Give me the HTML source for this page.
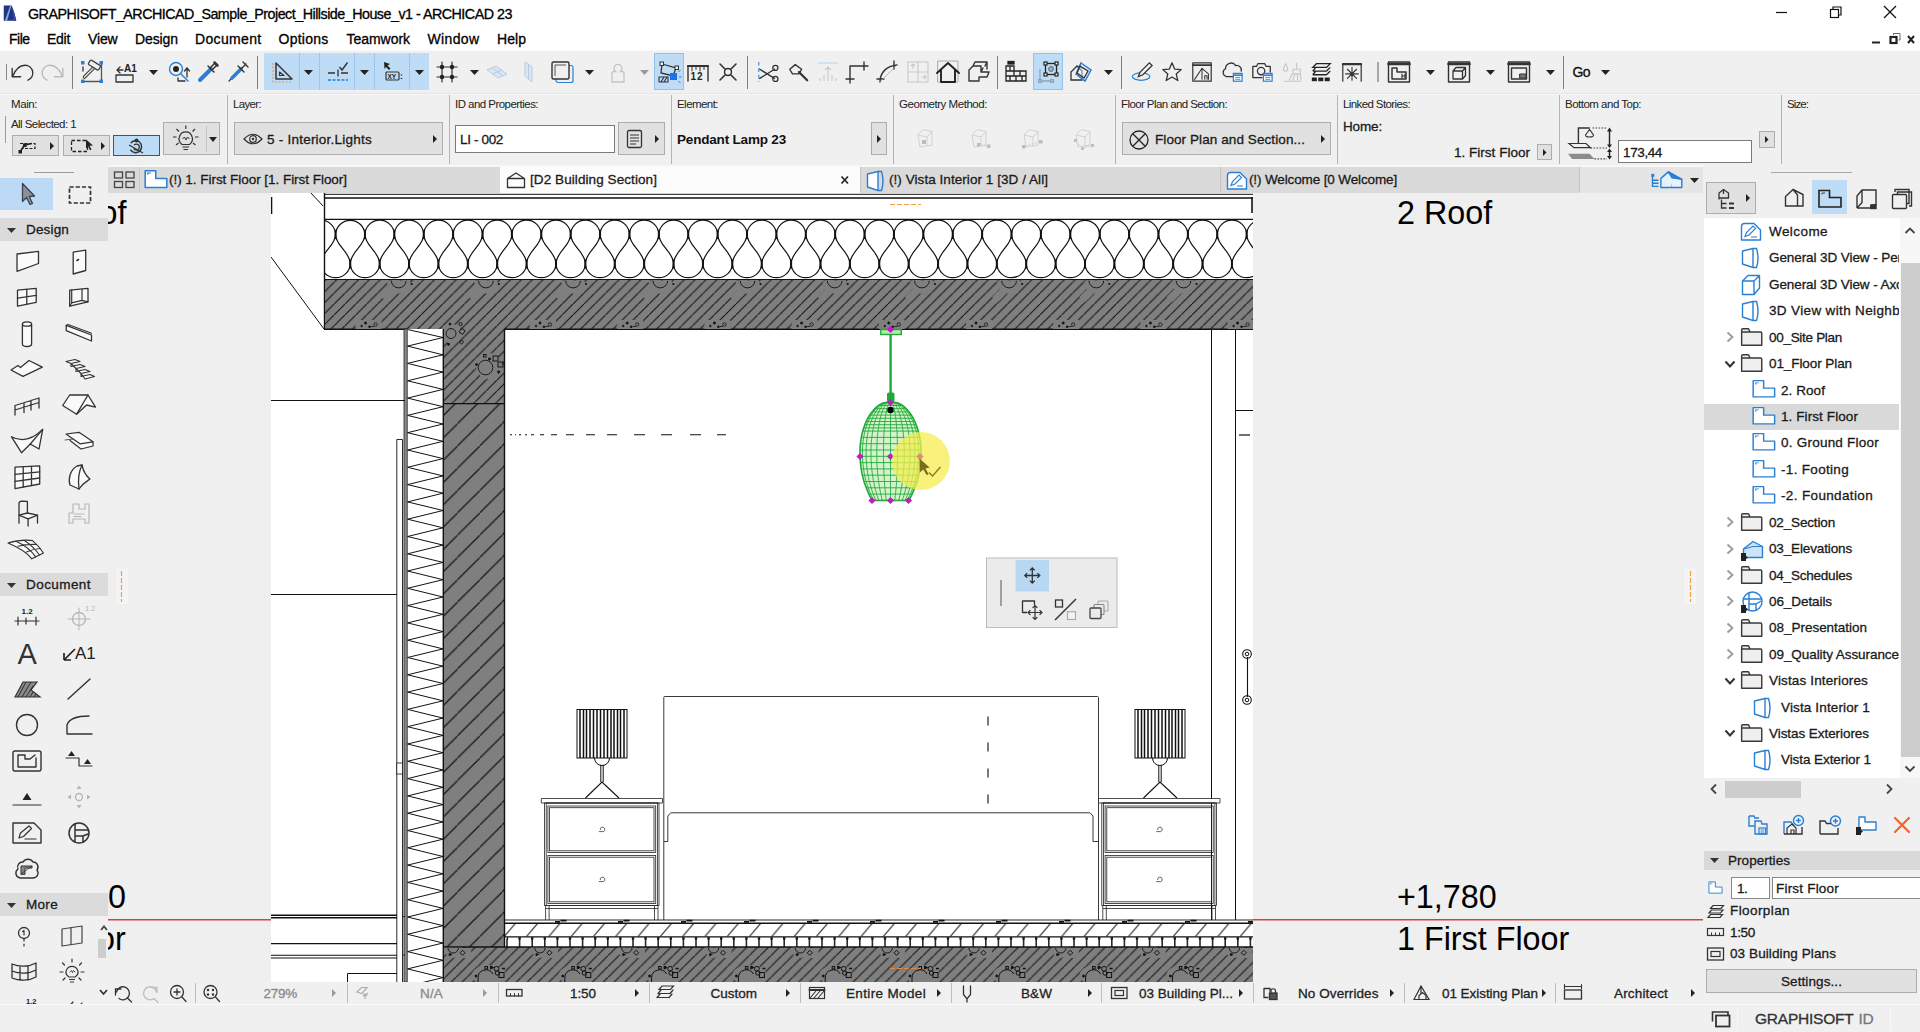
<!DOCTYPE html>
<html><head><meta charset="utf-8"><title>ARCHICAD 23</title>
<style>
html,body{margin:0;padding:0;background:#f0f0f0;}
body{width:1920px;height:1032px;position:relative;overflow:hidden;font-family:"Liberation Sans",sans-serif;}
.r{position:absolute;display:block;}
.t{position:absolute;white-space:pre;display:block;-webkit-text-stroke:0.3px currentColor;}
.n{-webkit-text-stroke:0;}
svg text{font-family:"Liberation Sans",sans-serif;}
</style></head><body>
<div class="r" style="left:0px;top:0px;width:1920px;height:49.5px;background:#ffffff;"></div>
<div class="r" style="left:0px;top:49.5px;width:1920px;height:1.5px;background:#f8f8f8;"></div>
<div class="r" style="left:0px;top:51px;width:1920px;height:115px;background:#f0f0f0;"></div>
<div class="r" style="left:0px;top:92.5px;width:1920px;height:1px;background:#e6e6e6;"></div>
<div class="r" style="left:0px;top:93.5px;width:1920px;height:1px;background:#f6f6f6;"></div>
<div class="r" style="left:0px;top:166px;width:108px;height:838px;background:#f0f0f0;"></div>
<div class="r" style="left:108px;top:166.5px;width:1595px;height:26.5px;background:#e3e3e3;"></div>
<div class="r" style="left:108px;top:193px;width:1595px;height:789px;background:#efefef;"></div>
<div class="r" style="left:108px;top:982px;width:1595px;height:22px;background:#f0f0f0;"></div>
<div class="r" style="left:1703px;top:166px;width:217px;height:838px;background:#f0f0f0;"></div>
<div class="r" style="left:0px;top:1004px;width:1920px;height:28px;background:#f0f0f0;"></div>
<span class="t" style="left:28.0px;top:4.8px;font-size:14.3px;line-height:19px;color:#000;letter-spacing:-0.506px;">GRAPHISOFT_ARCHICAD_Sample_Project_Hillside_House_v1 - ARCHICAD 23</span>
<span class="t" style="left:9.0px;top:29.8px;font-size:14px;line-height:18px;color:#000;letter-spacing:-0.515px;">File</span>
<span class="t" style="left:47.0px;top:29.8px;font-size:14px;line-height:18px;color:#000;letter-spacing:-0.281px;">Edit</span>
<span class="t" style="left:88.0px;top:29.8px;font-size:14px;line-height:18px;color:#000;letter-spacing:-0.148px;">View</span>
<span class="t" style="left:135.0px;top:29.8px;font-size:14px;line-height:18px;color:#000;letter-spacing:-0.097px;">Design</span>
<span class="t" style="left:195.0px;top:29.8px;font-size:14px;line-height:18px;color:#000;letter-spacing:0.336px;">Document</span>
<span class="t" style="left:278.5px;top:29.8px;font-size:14px;line-height:18px;color:#000;letter-spacing:0.250px;">Options</span>
<span class="t" style="left:346.5px;top:29.8px;font-size:14px;line-height:18px;color:#000;letter-spacing:-0.037px;">Teamwork</span>
<span class="t" style="left:427.5px;top:29.8px;font-size:14px;line-height:18px;color:#000;letter-spacing:0.368px;">Window</span>
<span class="t" style="left:497.0px;top:29.8px;font-size:14px;line-height:18px;color:#000;letter-spacing:0.051px;">Help</span>
<svg class="r" style="left:108px;top:193px;" width="1595" height="789" viewBox="108 193 1595 789" preserveAspectRatio="none"><defs>
<pattern id="hSlab" width="10.86" height="10.86" patternUnits="userSpaceOnUse" x="8.3" y="0">
<rect width="10.86" height="10.86" fill="#7f7f7f"/><path d="M-1,11.86 L11.86,-1" stroke="#151515" stroke-width="1.1"/></pattern>
<pattern id="hWall" width="22.3" height="22.3" patternUnits="userSpaceOnUse" x="11.5" y="0">
<rect width="22.3" height="22.3" fill="#7f7f7f"/><path d="M-1,23.3 L23.3,-1" stroke="#151515" stroke-width="1.2"/></pattern>
<pattern id="hFloor" width="10.86" height="10.86" patternUnits="userSpaceOnUse" x="10.7" y="0">
<rect width="10.86" height="10.86" fill="#7f7f7f"/><path d="M-1,11.86 L11.86,-1" stroke="#151515" stroke-width="1.1"/></pattern>
<pattern id="hScreed" width="22.3" height="14" patternUnits="userSpaceOnUse" x="504" y="923.3">
<path d="M0,13.5 L11.5,0" stroke="#111" stroke-width="1.1"/></pattern>
<clipPath id="cv"><rect x="271" y="193" width="982" height="789"/></clipPath>
<clipPath id="cvall"><rect x="108" y="193" width="1595" height="789"/></clipPath>
</defs>
<rect x="271" y="193" width="982" height="789" fill="#fff"/>
<g clip-path="url(#cv)" fill="none" stroke="#111" stroke-width="1">
<path d="M324,194.3H1253" stroke-width="1"/><path d="M324,198H1253" stroke-width="1.7"/>
<path d="M324.5,193V329" stroke-width="1.4"/>
<path d="M271.5,197V214" stroke-width="1.6"/>
<path d="M1252,197V213" stroke-width="1.6"/>
<path d="M311,193L323,206 M271,257L324,329"/>
<path d="M324,219.3H1253 M324,279.6H1253" stroke-width="1.3"/>
<g clip-path="url(#cIns)"><path d="M276.78,234.5 A14.70,14.70 0 0 1 306.17,234.5 M306.17,234.5 C306.17,246 291.47,252 291.47,263.8 M276.78,234.5 C276.78,246 291.47,252 291.47,263.8 M291.47,263.8 A14.70,14.25 0 0 0 320.86,263.8 M306.17,234.5 A14.70,14.70 0 0 1 335.56,234.5 M335.56,234.5 C335.56,246 320.86,252 320.86,263.8 M306.17,234.5 C306.17,246 320.86,252 320.86,263.8 M320.86,263.8 A14.70,14.25 0 0 0 350.25,263.8 M335.56,234.5 A14.70,14.70 0 0 1 364.94,234.5 M364.94,234.5 C364.94,246 350.25,252 350.25,263.8 M335.56,234.5 C335.56,246 350.25,252 350.25,263.8 M350.25,263.8 A14.70,14.25 0 0 0 379.64,263.8 M364.94,234.5 A14.70,14.70 0 0 1 394.33,234.5 M394.33,234.5 C394.33,246 379.64,252 379.64,263.8 M364.94,234.5 C364.94,246 379.64,252 379.64,263.8 M379.64,263.8 A14.70,14.25 0 0 0 409.03,263.8 M394.33,234.5 A14.70,14.70 0 0 1 423.72,234.5 M423.72,234.5 C423.72,246 409.03,252 409.03,263.8 M394.33,234.5 C394.33,246 409.03,252 409.03,263.8 M409.03,263.8 A14.70,14.25 0 0 0 438.42,263.8 M423.72,234.5 A14.70,14.70 0 0 1 453.11,234.5 M453.11,234.5 C453.11,246 438.42,252 438.42,263.8 M423.72,234.5 C423.72,246 438.42,252 438.42,263.8 M438.42,263.8 A14.70,14.25 0 0 0 467.81,263.8 M453.11,234.5 A14.70,14.70 0 0 1 482.50,234.5 M482.50,234.5 C482.50,246 467.81,252 467.81,263.8 M453.11,234.5 C453.11,246 467.81,252 467.81,263.8 M467.81,263.8 A14.70,14.25 0 0 0 497.20,263.8 M482.50,234.5 A14.70,14.70 0 0 1 511.89,234.5 M511.89,234.5 C511.89,246 497.20,252 497.20,263.8 M482.50,234.5 C482.50,246 497.20,252 497.20,263.8 M497.20,263.8 A14.70,14.25 0 0 0 526.59,263.8 M511.89,234.5 A14.70,14.70 0 0 1 541.28,234.5 M541.28,234.5 C541.28,246 526.59,252 526.59,263.8 M511.89,234.5 C511.89,246 526.59,252 526.59,263.8 M526.59,263.8 A14.70,14.25 0 0 0 555.98,263.8 M541.28,234.5 A14.70,14.70 0 0 1 570.67,234.5 M570.67,234.5 C570.67,246 555.98,252 555.98,263.8 M541.28,234.5 C541.28,246 555.98,252 555.98,263.8 M555.98,263.8 A14.70,14.25 0 0 0 585.37,263.8 M570.67,234.5 A14.70,14.70 0 0 1 600.06,234.5 M600.06,234.5 C600.06,246 585.37,252 585.37,263.8 M570.67,234.5 C570.67,246 585.37,252 585.37,263.8 M585.37,263.8 A14.70,14.25 0 0 0 614.76,263.8 M600.06,234.5 A14.70,14.70 0 0 1 629.45,234.5 M629.45,234.5 C629.45,246 614.76,252 614.76,263.8 M600.06,234.5 C600.06,246 614.76,252 614.76,263.8 M614.76,263.8 A14.70,14.25 0 0 0 644.15,263.8 M629.45,234.5 A14.70,14.70 0 0 1 658.84,234.5 M658.84,234.5 C658.84,246 644.15,252 644.15,263.8 M629.45,234.5 C629.45,246 644.15,252 644.15,263.8 M644.15,263.8 A14.70,14.25 0 0 0 673.54,263.8 M658.84,234.5 A14.70,14.70 0 0 1 688.23,234.5 M688.23,234.5 C688.23,246 673.54,252 673.54,263.8 M658.84,234.5 C658.84,246 673.54,252 673.54,263.8 M673.54,263.8 A14.70,14.25 0 0 0 702.93,263.8 M688.23,234.5 A14.70,14.70 0 0 1 717.62,234.5 M717.62,234.5 C717.62,246 702.93,252 702.93,263.8 M688.23,234.5 C688.23,246 702.93,252 702.93,263.8 M702.93,263.8 A14.70,14.25 0 0 0 732.32,263.8 M717.62,234.5 A14.70,14.70 0 0 1 747.01,234.5 M747.01,234.5 C747.01,246 732.32,252 732.32,263.8 M717.62,234.5 C717.62,246 732.32,252 732.32,263.8 M732.32,263.8 A14.70,14.25 0 0 0 761.71,263.8 M747.01,234.5 A14.70,14.70 0 0 1 776.40,234.5 M776.40,234.5 C776.40,246 761.71,252 761.71,263.8 M747.01,234.5 C747.01,246 761.71,252 761.71,263.8 M761.71,263.8 A14.70,14.25 0 0 0 791.10,263.8 M776.40,234.5 A14.70,14.70 0 0 1 805.79,234.5 M805.79,234.5 C805.79,246 791.10,252 791.10,263.8 M776.40,234.5 C776.40,246 791.10,252 791.10,263.8 M791.10,263.8 A14.70,14.25 0 0 0 820.49,263.8 M805.79,234.5 A14.70,14.70 0 0 1 835.18,234.5 M835.18,234.5 C835.18,246 820.49,252 820.49,263.8 M805.79,234.5 C805.79,246 820.49,252 820.49,263.8 M820.49,263.8 A14.70,14.25 0 0 0 849.88,263.8 M835.18,234.5 A14.70,14.70 0 0 1 864.57,234.5 M864.57,234.5 C864.57,246 849.88,252 849.88,263.8 M835.18,234.5 C835.18,246 849.88,252 849.88,263.8 M849.88,263.8 A14.70,14.25 0 0 0 879.27,263.8 M864.57,234.5 A14.70,14.70 0 0 1 893.96,234.5 M893.96,234.5 C893.96,246 879.27,252 879.27,263.8 M864.57,234.5 C864.57,246 879.27,252 879.27,263.8 M879.27,263.8 A14.70,14.25 0 0 0 908.66,263.8 M893.96,234.5 A14.70,14.70 0 0 1 923.35,234.5 M923.35,234.5 C923.35,246 908.66,252 908.66,263.8 M893.96,234.5 C893.96,246 908.66,252 908.66,263.8 M908.66,263.8 A14.70,14.25 0 0 0 938.05,263.8 M923.35,234.5 A14.70,14.70 0 0 1 952.74,234.5 M952.74,234.5 C952.74,246 938.05,252 938.05,263.8 M923.35,234.5 C923.35,246 938.05,252 938.05,263.8 M938.05,263.8 A14.70,14.25 0 0 0 967.44,263.8 M952.74,234.5 A14.70,14.70 0 0 1 982.13,234.5 M982.13,234.5 C982.13,246 967.44,252 967.44,263.8 M952.74,234.5 C952.74,246 967.44,252 967.44,263.8 M967.44,263.8 A14.70,14.25 0 0 0 996.83,263.8 M982.13,234.5 A14.70,14.70 0 0 1 1011.52,234.5 M1011.52,234.5 C1011.52,246 996.83,252 996.83,263.8 M982.13,234.5 C982.13,246 996.83,252 996.83,263.8 M996.83,263.8 A14.70,14.25 0 0 0 1026.22,263.8 M1011.52,234.5 A14.70,14.70 0 0 1 1040.91,234.5 M1040.91,234.5 C1040.91,246 1026.22,252 1026.22,263.8 M1011.52,234.5 C1011.52,246 1026.22,252 1026.22,263.8 M1026.22,263.8 A14.70,14.25 0 0 0 1055.61,263.8 M1040.91,234.5 A14.70,14.70 0 0 1 1070.30,234.5 M1070.30,234.5 C1070.30,246 1055.61,252 1055.61,263.8 M1040.91,234.5 C1040.91,246 1055.61,252 1055.61,263.8 M1055.61,263.8 A14.70,14.25 0 0 0 1085.00,263.8 M1070.31,234.5 A14.70,14.70 0 0 1 1099.69,234.5 M1099.69,234.5 C1099.69,246 1085.00,252 1085.00,263.8 M1070.31,234.5 C1070.31,246 1085.00,252 1085.00,263.8 M1085.00,263.8 A14.70,14.25 0 0 0 1114.39,263.8 M1099.70,234.5 A14.70,14.70 0 0 1 1129.09,234.5 M1129.09,234.5 C1129.09,246 1114.39,252 1114.39,263.8 M1099.70,234.5 C1099.70,246 1114.39,252 1114.39,263.8 M1114.39,263.8 A14.70,14.25 0 0 0 1143.78,263.8 M1129.09,234.5 A14.70,14.70 0 0 1 1158.48,234.5 M1158.48,234.5 C1158.48,246 1143.78,252 1143.78,263.8 M1129.09,234.5 C1129.09,246 1143.78,252 1143.78,263.8 M1143.78,263.8 A14.70,14.25 0 0 0 1173.17,263.8 M1158.48,234.5 A14.70,14.70 0 0 1 1187.87,234.5 M1187.87,234.5 C1187.87,246 1173.17,252 1173.17,263.8 M1158.48,234.5 C1158.48,246 1173.17,252 1173.17,263.8 M1173.17,263.8 A14.70,14.25 0 0 0 1202.56,263.8 M1187.87,234.5 A14.70,14.70 0 0 1 1217.26,234.5 M1217.26,234.5 C1217.26,246 1202.56,252 1202.56,263.8 M1187.87,234.5 C1187.87,246 1202.56,252 1202.56,263.8 M1202.56,263.8 A14.70,14.25 0 0 0 1231.95,263.8 M1217.26,234.5 A14.70,14.70 0 0 1 1246.65,234.5 M1246.65,234.5 C1246.65,246 1231.95,252 1231.95,263.8 M1217.26,234.5 C1217.26,246 1231.95,252 1231.95,263.8 M1231.95,263.8 A14.70,14.25 0 0 0 1261.34,263.8 M1246.65,234.5 A14.70,14.70 0 0 1 1276.04,234.5 M1276.04,234.5 C1276.04,246 1261.34,252 1261.34,263.8 M1246.65,234.5 C1246.65,246 1261.34,252 1261.34,263.8 M1261.34,263.8 A14.70,14.25 0 0 0 1290.73,263.8" stroke-width="1.2"/><path d="M306.17,230.5V239 M291.47,259.5V268.5 M335.56,230.5V239 M320.86,259.5V268.5 M364.94,230.5V239 M350.25,259.5V268.5 M394.33,230.5V239 M379.64,259.5V268.5 M423.72,230.5V239 M409.03,259.5V268.5 M453.11,230.5V239 M438.42,259.5V268.5 M482.50,230.5V239 M467.81,259.5V268.5 M511.89,230.5V239 M497.20,259.5V268.5 M541.28,230.5V239 M526.59,259.5V268.5 M570.67,230.5V239 M555.98,259.5V268.5 M600.06,230.5V239 M585.37,259.5V268.5 M629.45,230.5V239 M614.76,259.5V268.5 M658.84,230.5V239 M644.15,259.5V268.5 M688.23,230.5V239 M673.54,259.5V268.5 M717.62,230.5V239 M702.93,259.5V268.5 M747.01,230.5V239 M732.32,259.5V268.5 M776.40,230.5V239 M761.71,259.5V268.5 M805.79,230.5V239 M791.10,259.5V268.5 M835.18,230.5V239 M820.49,259.5V268.5 M864.57,230.5V239 M849.88,259.5V268.5 M893.96,230.5V239 M879.27,259.5V268.5 M923.35,230.5V239 M908.66,259.5V268.5 M952.74,230.5V239 M938.05,259.5V268.5 M982.13,230.5V239 M967.44,259.5V268.5 M1011.52,230.5V239 M996.83,259.5V268.5 M1040.91,230.5V239 M1026.22,259.5V268.5 M1070.30,230.5V239 M1055.61,259.5V268.5 M1099.69,230.5V239 M1085.00,259.5V268.5 M1129.09,230.5V239 M1114.39,259.5V268.5 M1158.48,230.5V239 M1143.78,259.5V268.5 M1187.87,230.5V239 M1173.17,259.5V268.5 M1217.26,230.5V239 M1202.56,259.5V268.5 M1246.65,230.5V239 M1231.95,259.5V268.5 M1276.04,230.5V239 M1261.34,259.5V268.5" stroke-width="2"/></g>
<defs><clipPath id="cIns"><rect x="325" y="219" width="928" height="61"/></clipPath></defs>
<rect x="325" y="280" width="928" height="49" fill="url(#hSlab)" stroke="none"/>
<path d="M324,329.3H407 M504,329.3H1253" stroke-width="1.6"/>
<g clip-path="url(#cSlab)">
<circle cx="398.7" cy="282" r="11.5" fill="#7f7f7f" stroke="none"/><path d="M381.7,297l9,-9l5.500,5.500l-9,9z" fill="#7f7f7f" stroke="none"/>
<path d="M391.3,280.500 a7.400,7.400 0 0 0 14.800,0" stroke-width="0.9"/><circle cx="411.7" cy="284" r="1.1" fill="#111" stroke="none"/>
<circle cx="485.9" cy="282" r="11.5" fill="#7f7f7f" stroke="none"/><path d="M468.9,297l9,-9l5.500,5.500l-9,9z" fill="#7f7f7f" stroke="none"/>
<path d="M478.5,280.500 a7.400,7.400 0 0 0 14.800,0" stroke-width="0.9"/><circle cx="498.9" cy="284" r="1.1" fill="#111" stroke="none"/>
<circle cx="573.1" cy="282" r="11.5" fill="#7f7f7f" stroke="none"/><path d="M556.1,297l9,-9l5.500,5.500l-9,9z" fill="#7f7f7f" stroke="none"/>
<path d="M565.7,280.500 a7.400,7.400 0 0 0 14.800,0" stroke-width="0.9"/><circle cx="586.1" cy="284" r="1.1" fill="#111" stroke="none"/>
<circle cx="660.3" cy="282" r="11.5" fill="#7f7f7f" stroke="none"/><path d="M643.3,297l9,-9l5.500,5.500l-9,9z" fill="#7f7f7f" stroke="none"/>
<path d="M652.9,280.500 a7.400,7.400 0 0 0 14.800,0" stroke-width="0.9"/><circle cx="673.3" cy="284" r="1.1" fill="#111" stroke="none"/>
<circle cx="747.5" cy="282" r="11.5" fill="#7f7f7f" stroke="none"/><path d="M730.5,297l9,-9l5.500,5.500l-9,9z" fill="#7f7f7f" stroke="none"/>
<path d="M740.1,280.500 a7.400,7.400 0 0 0 14.800,0" stroke-width="0.9"/><circle cx="760.5" cy="284" r="1.1" fill="#111" stroke="none"/>
<circle cx="834.7" cy="282" r="11.5" fill="#7f7f7f" stroke="none"/><path d="M817.7,297l9,-9l5.500,5.500l-9,9z" fill="#7f7f7f" stroke="none"/>
<path d="M827.3,280.500 a7.400,7.400 0 0 0 14.800,0" stroke-width="0.9"/><circle cx="847.7" cy="284" r="1.1" fill="#111" stroke="none"/>
<circle cx="921.9" cy="282" r="11.5" fill="#7f7f7f" stroke="none"/><path d="M904.9,297l9,-9l5.500,5.500l-9,9z" fill="#7f7f7f" stroke="none"/>
<path d="M914.5,280.500 a7.400,7.400 0 0 0 14.800,0" stroke-width="0.9"/><circle cx="934.9" cy="284" r="1.1" fill="#111" stroke="none"/>
<circle cx="1009.1" cy="282" r="11.5" fill="#7f7f7f" stroke="none"/><path d="M992.1,297l9,-9l5.500,5.500l-9,9z" fill="#7f7f7f" stroke="none"/>
<path d="M1001.7,280.500 a7.400,7.400 0 0 0 14.800,0" stroke-width="0.9"/><circle cx="1022.1" cy="284" r="1.1" fill="#111" stroke="none"/>
<circle cx="1096.3" cy="282" r="11.5" fill="#7f7f7f" stroke="none"/><path d="M1079.3,297l9,-9l5.500,5.500l-9,9z" fill="#7f7f7f" stroke="none"/>
<path d="M1088.9,280.500 a7.400,7.400 0 0 0 14.800,0" stroke-width="0.9"/><circle cx="1109.3" cy="284" r="1.1" fill="#111" stroke="none"/>
<circle cx="1183.5" cy="282" r="11.5" fill="#7f7f7f" stroke="none"/><path d="M1166.5,297l9,-9l5.500,5.500l-9,9z" fill="#7f7f7f" stroke="none"/>
<path d="M1176.1,280.500 a7.400,7.400 0 0 0 14.800,0" stroke-width="0.9"/><circle cx="1196.5" cy="284" r="1.1" fill="#111" stroke="none"/>
<circle cx="1270.7" cy="282" r="11.5" fill="#7f7f7f" stroke="none"/><path d="M1253.7,297l9,-9l5.500,5.500l-9,9z" fill="#7f7f7f" stroke="none"/>
<path d="M1263.3,280.500 a7.400,7.400 0 0 0 14.800,0" stroke-width="0.9"/><circle cx="1283.7" cy="284" r="1.1" fill="#111" stroke="none"/>
<rect x="355.6" y="320" width="26" height="9" fill="#7f7f7f" stroke="none"/>
<g stroke-width="0.8"><circle cx="375.6" cy="324.500" r="1.700"/><circle cx="365.6" cy="323" r="1.100" fill="#111"/><circle cx="369.6" cy="326.800" r="0.900" fill="#111"/><circle cx="361.6" cy="326" r="0.800" fill="#111"/><path d="M371.1,326.500h3" /></g>
<rect x="530.0" y="320" width="26" height="9" fill="#7f7f7f" stroke="none"/>
<g stroke-width="0.8"><circle cx="550.0" cy="324.500" r="1.700"/><circle cx="540.0" cy="323" r="1.100" fill="#111"/><circle cx="544.0" cy="326.800" r="0.900" fill="#111"/><circle cx="536.0" cy="326" r="0.800" fill="#111"/><path d="M545.5,326.500h3" /></g>
<rect x="617.2" y="320" width="26" height="9" fill="#7f7f7f" stroke="none"/>
<g stroke-width="0.8"><circle cx="637.2" cy="324.500" r="1.700"/><circle cx="627.2" cy="323" r="1.100" fill="#111"/><circle cx="631.2" cy="326.800" r="0.900" fill="#111"/><circle cx="623.2" cy="326" r="0.800" fill="#111"/><path d="M632.7,326.500h3" /></g>
<rect x="704.4" y="320" width="26" height="9" fill="#7f7f7f" stroke="none"/>
<g stroke-width="0.8"><circle cx="724.4" cy="324.500" r="1.700"/><circle cx="714.4" cy="323" r="1.100" fill="#111"/><circle cx="718.4" cy="326.800" r="0.900" fill="#111"/><circle cx="710.4" cy="326" r="0.800" fill="#111"/><path d="M719.9,326.500h3" /></g>
<rect x="791.6" y="320" width="26" height="9" fill="#7f7f7f" stroke="none"/>
<g stroke-width="0.8"><circle cx="811.6" cy="324.500" r="1.700"/><circle cx="801.6" cy="323" r="1.100" fill="#111"/><circle cx="805.6" cy="326.800" r="0.900" fill="#111"/><circle cx="797.6" cy="326" r="0.800" fill="#111"/><path d="M807.1,326.500h3" /></g>
<rect x="878.8" y="320" width="26" height="9" fill="#7f7f7f" stroke="none"/>
<g stroke-width="0.8"><circle cx="898.8" cy="324.500" r="1.700"/><circle cx="888.8" cy="323" r="1.100" fill="#111"/><circle cx="892.8" cy="326.800" r="0.900" fill="#111"/><circle cx="884.8" cy="326" r="0.800" fill="#111"/><path d="M894.3,326.500h3" /></g>
<rect x="966.0" y="320" width="26" height="9" fill="#7f7f7f" stroke="none"/>
<g stroke-width="0.8"><circle cx="986.0" cy="324.500" r="1.700"/><circle cx="976.0" cy="323" r="1.100" fill="#111"/><circle cx="980.0" cy="326.800" r="0.900" fill="#111"/><circle cx="972.0" cy="326" r="0.800" fill="#111"/><path d="M981.5,326.500h3" /></g>
<rect x="1053.2" y="320" width="26" height="9" fill="#7f7f7f" stroke="none"/>
<g stroke-width="0.8"><circle cx="1073.2" cy="324.500" r="1.700"/><circle cx="1063.2" cy="323" r="1.100" fill="#111"/><circle cx="1067.2" cy="326.800" r="0.900" fill="#111"/><circle cx="1059.2" cy="326" r="0.800" fill="#111"/><path d="M1068.7,326.500h3" /></g>
<rect x="1140.4" y="320" width="26" height="9" fill="#7f7f7f" stroke="none"/>
<g stroke-width="0.8"><circle cx="1160.4" cy="324.500" r="1.700"/><circle cx="1150.4" cy="323" r="1.100" fill="#111"/><circle cx="1154.4" cy="326.800" r="0.900" fill="#111"/><circle cx="1146.4" cy="326" r="0.800" fill="#111"/><path d="M1155.9,326.500h3" /></g>
<rect x="1227.6" y="320" width="26" height="9" fill="#7f7f7f" stroke="none"/>
<g stroke-width="0.8"><circle cx="1247.6" cy="324.500" r="1.700"/><circle cx="1237.6" cy="323" r="1.100" fill="#111"/><circle cx="1241.6" cy="326.800" r="0.900" fill="#111"/><circle cx="1233.6" cy="326" r="0.800" fill="#111"/><path d="M1243.1,326.500h3" /></g>
</g>
<defs><clipPath id="cSlab"><rect x="325" y="280.500" width="928" height="48.500"/></clipPath></defs>
<rect x="443" y="329" width="61.5" height="75" fill="url(#hSlab)" stroke="none"/>
<rect x="443" y="404" width="61.5" height="543" fill="url(#hWall)" stroke="none"/>
<path d="M443,403.6H504.5" stroke-width="1.2"/>
<path d="M443.3,329V947 M504.5,329V947" stroke-width="1.4"/>
<rect x="404" y="329" width="3.2" height="653" fill="#8c8c8c" stroke="#222" stroke-width="0.8"/>
<path d="M407.6,329.5 L443,337.5 L407.6,346.1 L443,354.8 L407.6,363.4 L443,372.1 L407.6,380.8 L443,389.4 L407.6,398.1 L443,406.7 L407.6,415.4 L443,424.0 L407.6,432.7 L443,441.3 L407.6,450.0 L443,458.6 L407.6,467.3 L443,475.9 L407.6,484.6 L443,493.2 L407.6,501.9 L443,510.5 L407.6,519.2 L443,527.8 L407.6,536.5 L443,545.1 L407.6,553.8 L443,562.4 L407.6,571.0 L443,579.7 L407.6,588.3 L443,597.0 L407.6,605.6 L443,614.3 L407.6,622.9 L443,631.6 L407.6,640.2 L443,648.9 L407.6,657.5 L443,666.2 L407.6,674.8 L443,683.5 L407.6,692.1 L443,700.8 L407.6,709.4 L443,718.1 L407.6,726.7 L443,735.4 L407.6,744.0 L443,752.7 L407.6,761.3 L443,770.0 L407.6,778.6 L443,787.3 L407.6,795.9 L443,804.6 L407.6,813.2 L443,821.9 L407.6,830.5 L443,839.2 L407.6,847.8 L443,856.5 L407.6,865.1 L443,873.8 L407.6,882.4 L443,891.1 L407.6,899.7 L443,908.4 L407.6,917.0 L443,925.7 L407.6,934.3 L443,943.0 L407.6,951.6 L443,960.3 L407.6,968.9 L443,977.6 L407.6,986.2" stroke-width="1" stroke-linejoin="miter"/>
<g clip-path="url(#cWallTop)"><circle cx="452" cy="334" r="10" fill="#7f7f7f" stroke="none"/><circle cx="489" cy="366" r="13" fill="#7f7f7f" stroke="none"/>
<g stroke-width="0.9"><circle cx="451" cy="333.500" r="5"/><rect x="460" y="329" width="4.500" height="4.500" transform="rotate(35 462 331)"/><rect x="460" y="340.500" width="3" height="3" transform="rotate(45 461.500 342)"/><circle cx="450" cy="324" r="1" fill="#111"/><path d="M447.500,343l2.500,1l-2,1.500z" fill="#111"/><circle cx="460.500" cy="324" r="1.600"/><circle cx="485.500" cy="367.500" r="7.300"/><rect x="493" y="356" width="5" height="5"/><rect x="498" y="362" width="5" height="5"/><rect x="483.500" y="354.500" width="2.500" height="2.500"/><circle cx="476.500" cy="364.500" r="1" fill="#111"/><circle cx="489.500" cy="359" r="1.100" fill="#111"/><path d="M497.500,371l2.500,0.500l-1.500,2z" fill="#111"/></g></g>
<defs><clipPath id="cWallTop"><rect x="444" y="322" width="60" height="82"/></clipPath></defs>
<path d="M271,400.5H405 M271,594.5H397"/>
<path d="M396.8,982V439.5H402.5V982" stroke-width="0.9"/>
<rect x="396.8" y="763" width="5.7" height="11" fill="#fff" stroke-width="0.8"/>
<path d="M271,915.2H397 M271,917.8H397" stroke-width="1.4"/><path d="M271,943.6H397 M271,955.2H397 M271,958H397" stroke-width="1.1"/>
<path d="M347.5,982V973.5H397"/>
<path d="M402,916.5H405 M402,955H405" stroke-width="0.8"/>
<path d="M510,434.8H512 M515,434.8H516 M519,434.8H521 M525,434.8H527 M531,434.8H534 M540,434.8H544 M551,434.8H557 M566,434.8H574 M586,434.8H595 M607,434.8H617 M634,434.8H645 M661,434.8H672 M690,434.8H701 M717,434.8H726" stroke-width="1.1"/>
<path d="M1211.5,329V920 M1235.5,329V920"/>
<path d="M1236,410.5H1253"/><path d="M1239,435H1250" stroke-width="1.2"/>
<path d="M1247.5,657V697" stroke-width="1.1"/>
<circle cx="1247" cy="654" r="4.3" stroke-width="1.1"/><circle cx="1247" cy="654" r="1.8" stroke-width="1"/>
<circle cx="1247" cy="700" r="4.3" stroke-width="1.1"/><circle cx="1247" cy="700" r="1.8" stroke-width="1"/>
<path d="M504.5,920H1253" stroke-width="0.9"/><path d="M504.5,923.2H1253" stroke-width="1.4"/>
<rect x="505" y="923.3" width="748" height="13.5" fill="url(#hScreed)" stroke="none"/>
<path d="M504.5,936.9H1253" stroke-width="1.1"/>
<path d="M507.0,947V938.5 M519.6,947V938.5 M532.2,947V938.5 M544.8,947V938.5 M557.4,947V938.5 M570.0,947V938.5 M582.6,947V938.5 M595.2,947V938.5 M607.8,947V938.5 M620.4,947V938.5 M633.0,947V938.5 M645.6,947V938.5 M658.2,947V938.5 M670.8,947V938.5 M683.4,947V938.5 M696.0,947V938.5 M708.6,947V938.5 M721.2,947V938.5 M733.8,947V938.5 M746.4,947V938.5 M759.0,947V938.5 M771.6,947V938.5 M784.2,947V938.5 M796.8,947V938.5 M809.4,947V938.5 M822.0,947V938.5 M834.6,947V938.5 M847.2,947V938.5 M859.8,947V938.5 M872.4,947V938.5 M885.0,947V938.5 M897.6,947V938.5 M910.2,947V938.5 M922.8,947V938.5 M935.4,947V938.5 M948.0,947V938.5 M960.6,947V938.5 M973.2,947V938.5 M985.8,947V938.5 M998.4,947V938.5 M1011.0,947V938.5 M1023.6,947V938.5 M1036.2,947V938.5 M1048.8,947V938.5 M1061.4,947V938.5 M1074.0,947V938.5 M1086.6,947V938.5 M1099.2,947V938.5 M1111.8,947V938.5 M1124.4,947V938.5 M1137.0,947V938.5 M1149.6,947V938.5 M1162.2,947V938.5 M1174.8,947V938.5 M1187.4,947V938.5 M1200.0,947V938.5 M1212.6,947V938.5 M1225.2,947V938.5 M1237.8,947V938.5 M1250.4,947V938.5" stroke="#2a2a2a" stroke-width="1.6"/>
<path d="M507,938.3H1253" stroke="#111" stroke-width="2.2" stroke-dasharray="2.4 10.2" stroke-dashoffset="1.2"/>
<path d="M555.0,921.9h5 M560.5,920.6h6 M618.0,921.9h5 M623.5,920.6h6 M681.0,921.9h5 M686.5,920.6h6 M744.0,921.9h5 M749.5,920.6h6 M807.0,921.9h5 M812.5,920.6h6 M870.0,921.9h5 M875.5,920.6h6 M933.0,921.9h5 M938.5,920.6h6 M996.0,921.9h5 M1001.5,920.6h6 M1059.0,921.9h5 M1064.5,920.6h6 M1122.0,921.9h5 M1127.5,920.6h6 M1185.0,921.9h5 M1190.5,920.6h6 M1248.0,921.9h5 M1253.5,920.6h6" stroke-width="1.6"/>
<rect x="443" y="947" width="810" height="36" fill="url(#hFloor)" stroke="none"/>
<path d="M443,947H1253" stroke-width="1.4"/>
<path d="M443.3,947V982" stroke-width="1.4"/>
<g clip-path="url(#cFloor)">
<circle cx="453.2" cy="949" r="9" fill="#7f7f7f" stroke="none"/><rect x="459.2" y="948" width="12" height="10" fill="#7f7f7f" stroke="none"/>
<g stroke-width="0.9"><path d="M448.0,947.800 a5.200,5.200 0 0 0 10.400,0"/><rect x="460.8" y="951" width="3.600" height="3.600" transform="rotate(45 462.6 952.800)"/><path d="M449.2,953.500l2.600,1l-2.600,1.200z" fill="#111"/></g>
<circle cx="540.0" cy="949" r="9" fill="#7f7f7f" stroke="none"/><rect x="546.0" y="948" width="12" height="10" fill="#7f7f7f" stroke="none"/>
<g stroke-width="0.9"><path d="M534.8,947.800 a5.200,5.200 0 0 0 10.400,0"/><rect x="547.6" y="951" width="3.600" height="3.600" transform="rotate(45 549.4 952.800)"/><path d="M536.0,953.500l2.600,1l-2.600,1.200z" fill="#111"/></g>
<circle cx="626.8" cy="949" r="9" fill="#7f7f7f" stroke="none"/><rect x="632.8" y="948" width="12" height="10" fill="#7f7f7f" stroke="none"/>
<g stroke-width="0.9"><path d="M621.6,947.800 a5.200,5.200 0 0 0 10.400,0"/><rect x="634.4" y="951" width="3.600" height="3.600" transform="rotate(45 636.2 952.800)"/><path d="M622.8,953.500l2.600,1l-2.600,1.200z" fill="#111"/></g>
<circle cx="713.6" cy="949" r="9" fill="#7f7f7f" stroke="none"/><rect x="719.6" y="948" width="12" height="10" fill="#7f7f7f" stroke="none"/>
<g stroke-width="0.9"><path d="M708.4,947.800 a5.200,5.200 0 0 0 10.400,0"/><rect x="721.2" y="951" width="3.600" height="3.600" transform="rotate(45 723.0 952.800)"/><path d="M709.6,953.500l2.600,1l-2.600,1.200z" fill="#111"/></g>
<circle cx="800.4" cy="949" r="9" fill="#7f7f7f" stroke="none"/><rect x="806.4" y="948" width="12" height="10" fill="#7f7f7f" stroke="none"/>
<g stroke-width="0.9"><path d="M795.2,947.800 a5.200,5.200 0 0 0 10.400,0"/><rect x="808.0" y="951" width="3.600" height="3.600" transform="rotate(45 809.8 952.800)"/><path d="M796.4,953.500l2.600,1l-2.600,1.200z" fill="#111"/></g>
<circle cx="887.2" cy="949" r="9" fill="#7f7f7f" stroke="none"/><rect x="893.2" y="948" width="12" height="10" fill="#7f7f7f" stroke="none"/>
<g stroke-width="0.9"><path d="M882.0,947.800 a5.200,5.200 0 0 0 10.400,0"/><rect x="894.8" y="951" width="3.600" height="3.600" transform="rotate(45 896.6 952.800)"/><path d="M883.2,953.500l2.600,1l-2.600,1.200z" fill="#111"/></g>
<circle cx="974.0" cy="949" r="9" fill="#7f7f7f" stroke="none"/><rect x="980.0" y="948" width="12" height="10" fill="#7f7f7f" stroke="none"/>
<g stroke-width="0.9"><path d="M968.8,947.800 a5.200,5.200 0 0 0 10.400,0"/><rect x="981.6" y="951" width="3.600" height="3.600" transform="rotate(45 983.4 952.800)"/><path d="M970.0,953.500l2.600,1l-2.600,1.200z" fill="#111"/></g>
<circle cx="1060.8" cy="949" r="9" fill="#7f7f7f" stroke="none"/><rect x="1066.8" y="948" width="12" height="10" fill="#7f7f7f" stroke="none"/>
<g stroke-width="0.9"><path d="M1055.6,947.800 a5.200,5.200 0 0 0 10.400,0"/><rect x="1068.4" y="951" width="3.600" height="3.600" transform="rotate(45 1070.2 952.800)"/><path d="M1056.8,953.500l2.600,1l-2.600,1.200z" fill="#111"/></g>
<circle cx="1147.6" cy="949" r="9" fill="#7f7f7f" stroke="none"/><rect x="1153.6" y="948" width="12" height="10" fill="#7f7f7f" stroke="none"/>
<g stroke-width="0.9"><path d="M1142.4,947.800 a5.200,5.200 0 0 0 10.400,0"/><rect x="1155.2" y="951" width="3.600" height="3.600" transform="rotate(45 1157.0 952.800)"/><path d="M1143.6,953.500l2.600,1l-2.600,1.200z" fill="#111"/></g>
<circle cx="1234.4" cy="949" r="9" fill="#7f7f7f" stroke="none"/><rect x="1240.4" y="948" width="12" height="10" fill="#7f7f7f" stroke="none"/>
<g stroke-width="0.9"><path d="M1229.2,947.800 a5.200,5.200 0 0 0 10.400,0"/><rect x="1242.0" y="951" width="3.600" height="3.600" transform="rotate(45 1243.8 952.800)"/><path d="M1230.4,953.500l2.600,1l-2.600,1.200z" fill="#111"/></g>
<ellipse cx="489.0" cy="975" rx="17" ry="10" fill="#7f7f7f" stroke="none"/>
<g stroke-width="1"><path d="M478.0,982v-4 a8,8 0 0 1 15,-4"/><circle cx="496.5" cy="968.800" r="2.400"/><rect x="499.0" y="972.500" width="5" height="5"/><circle cx="497.5" cy="973" r="2.200"/><rect x="485.0" y="966.500" width="2.500" height="2.500"/><path d="M490.5,966l3,1.500l-3,1.500z" fill="#111"/><circle cx="476.0" cy="976" r="1" fill="#111"/><path d="M502.0,968.500h3" stroke-width="1.500"/></g>
<ellipse cx="575.8" cy="975" rx="17" ry="10" fill="#7f7f7f" stroke="none"/>
<g stroke-width="1"><path d="M564.8,982v-4 a8,8 0 0 1 15,-4"/><circle cx="583.3" cy="968.800" r="2.400"/><rect x="585.8" y="972.500" width="5" height="5"/><circle cx="584.3" cy="973" r="2.200"/><rect x="571.8" y="966.500" width="2.500" height="2.500"/><path d="M577.3,966l3,1.500l-3,1.500z" fill="#111"/><circle cx="562.8" cy="976" r="1" fill="#111"/><path d="M588.8,968.500h3" stroke-width="1.500"/></g>
<ellipse cx="662.6" cy="975" rx="17" ry="10" fill="#7f7f7f" stroke="none"/>
<g stroke-width="1"><path d="M651.6,982v-4 a8,8 0 0 1 15,-4"/><circle cx="670.1" cy="968.800" r="2.400"/><rect x="672.6" y="972.500" width="5" height="5"/><circle cx="671.1" cy="973" r="2.200"/><rect x="658.6" y="966.500" width="2.500" height="2.500"/><path d="M664.1,966l3,1.500l-3,1.500z" fill="#111"/><circle cx="649.6" cy="976" r="1" fill="#111"/><path d="M675.6,968.500h3" stroke-width="1.500"/></g>
<ellipse cx="749.4" cy="975" rx="17" ry="10" fill="#7f7f7f" stroke="none"/>
<g stroke-width="1"><path d="M738.4,982v-4 a8,8 0 0 1 15,-4"/><circle cx="756.9" cy="968.800" r="2.400"/><rect x="759.4" y="972.500" width="5" height="5"/><circle cx="757.9" cy="973" r="2.200"/><rect x="745.4" y="966.500" width="2.500" height="2.500"/><path d="M750.9,966l3,1.500l-3,1.500z" fill="#111"/><circle cx="736.4" cy="976" r="1" fill="#111"/><path d="M762.4,968.500h3" stroke-width="1.500"/></g>
<ellipse cx="836.2" cy="975" rx="17" ry="10" fill="#7f7f7f" stroke="none"/>
<g stroke-width="1"><path d="M825.2,982v-4 a8,8 0 0 1 15,-4"/><circle cx="843.7" cy="968.800" r="2.400"/><rect x="846.2" y="972.500" width="5" height="5"/><circle cx="844.7" cy="973" r="2.200"/><rect x="832.2" y="966.500" width="2.500" height="2.500"/><path d="M837.7,966l3,1.500l-3,1.500z" fill="#111"/><circle cx="823.2" cy="976" r="1" fill="#111"/><path d="M849.2,968.500h3" stroke-width="1.500"/></g>
<ellipse cx="923.0" cy="975" rx="17" ry="10" fill="#7f7f7f" stroke="none"/>
<g stroke-width="1"><path d="M912.0,982v-4 a8,8 0 0 1 15,-4"/><circle cx="930.5" cy="968.800" r="2.400"/><rect x="933.0" y="972.500" width="5" height="5"/><circle cx="931.5" cy="973" r="2.200"/><rect x="919.0" y="966.500" width="2.500" height="2.500"/><path d="M924.5,966l3,1.500l-3,1.500z" fill="#111"/><circle cx="910.0" cy="976" r="1" fill="#111"/><path d="M936.0,968.500h3" stroke-width="1.500"/></g>
<ellipse cx="1009.8" cy="975" rx="17" ry="10" fill="#7f7f7f" stroke="none"/>
<g stroke-width="1"><path d="M998.8,982v-4 a8,8 0 0 1 15,-4"/><circle cx="1017.3" cy="968.800" r="2.400"/><rect x="1019.8" y="972.500" width="5" height="5"/><circle cx="1018.3" cy="973" r="2.200"/><rect x="1005.8" y="966.500" width="2.500" height="2.500"/><path d="M1011.3,966l3,1.500l-3,1.500z" fill="#111"/><circle cx="996.8" cy="976" r="1" fill="#111"/><path d="M1022.8,968.500h3" stroke-width="1.500"/></g>
<ellipse cx="1096.6" cy="975" rx="17" ry="10" fill="#7f7f7f" stroke="none"/>
<g stroke-width="1"><path d="M1085.6,982v-4 a8,8 0 0 1 15,-4"/><circle cx="1104.1" cy="968.800" r="2.400"/><rect x="1106.6" y="972.500" width="5" height="5"/><circle cx="1105.1" cy="973" r="2.200"/><rect x="1092.6" y="966.500" width="2.500" height="2.500"/><path d="M1098.1,966l3,1.500l-3,1.500z" fill="#111"/><circle cx="1083.6" cy="976" r="1" fill="#111"/><path d="M1109.6,968.500h3" stroke-width="1.500"/></g>
<ellipse cx="1183.4" cy="975" rx="17" ry="10" fill="#7f7f7f" stroke="none"/>
<g stroke-width="1"><path d="M1172.4,982v-4 a8,8 0 0 1 15,-4"/><circle cx="1190.9" cy="968.800" r="2.400"/><rect x="1193.4" y="972.500" width="5" height="5"/><circle cx="1191.9" cy="973" r="2.200"/><rect x="1179.4" y="966.500" width="2.500" height="2.500"/><path d="M1184.9,966l3,1.500l-3,1.500z" fill="#111"/><circle cx="1170.4" cy="976" r="1" fill="#111"/><path d="M1196.4,968.500h3" stroke-width="1.500"/></g>
</g>
<defs><clipPath id="cFloor"><rect x="444" y="947.800" width="809" height="35"/></clipPath></defs>
</g>
<g clip-path="url(#cv)">
<g fill="none" stroke="#222" stroke-width="0.9">
<path d="M663.8,920V697.5 Q663.8,696.5 664.8,696.5 H1097.5 Q1098.5,696.5 1098.5,697.5 V920"/>
<path d="M663.8,841.5H667.8V816L670.8,812.8H1090L1093,816V841.5H1098.5"/>
<path d="M988,716.5V805" stroke-dasharray="9 17" stroke-width="1.2"/>
</g>
<g fill="none" stroke="#222" stroke-width="0.8">
<path d="M541.3,798.5H662.5 V803 H541.3 Z" fill="#fff"/>
<rect x="544.6" y="803" width="114.4" height="102.5"/>
<rect x="546.2" y="803" width="111.2" height="102.5"/>
<rect x="547.9" y="806.0" width="107.8" height="46.5"/>
<rect x="549.6" y="807.7" width="104.4" height="43.1"/>
<rect x="547.9" y="855.5" width="107.8" height="48.0"/>
<rect x="549.6" y="857.2" width="104.4" height="44.6"/>
<path d="M545.6,905.5V920 M549.1,905.5V920 M658.0,905.5V920 M654.5,905.5V920 M545.6,908.5H658.0"/>
<path d="M600.3,830.0 a2.3,2.3 0 1 1 3,1.6 h-4.5" stroke-width="0.7"/>
<path d="M600.3,880.0 a2.3,2.3 0 1 1 3,1.6 h-4.5" stroke-width="0.7"/>
</g>
<g fill="none" stroke="#222" stroke-width="0.8">
<path d="M1098.5,798.5H1220.0 V803 H1098.5 Z" fill="#fff"/>
<rect x="1101.8" y="803" width="114.7" height="102.5"/>
<rect x="1103.4" y="803" width="111.5" height="102.5"/>
<rect x="1105.1" y="806.0" width="108.1" height="46.5"/>
<rect x="1106.8" y="807.7" width="104.7" height="43.1"/>
<rect x="1105.1" y="855.5" width="108.1" height="48.0"/>
<rect x="1106.8" y="857.2" width="104.7" height="44.6"/>
<path d="M1102.8,905.5V920 M1106.3,905.5V920 M1215.5,905.5V920 M1212.0,905.5V920 M1102.8,908.5H1215.5"/>
<path d="M1157.7,830.0 a2.3,2.3 0 1 1 3,1.6 h-4.5" stroke-width="0.7"/>
<path d="M1157.7,880.0 a2.3,2.3 0 1 1 3,1.6 h-4.5" stroke-width="0.7"/>
</g>
<g fill="none" stroke="#111" stroke-width="1">
<rect x="577.0" y="709.5" width="50" height="48.5" fill="#fff" stroke-width="1"/>
<path d="M580.0,709.5V758 M583.5,709.5V758 M586.5,709.5V758 M590.0,709.5V758 M593.5,709.5V758 M597.0,709.5V758 M600.5,709.5V758 M604.0,709.5V758 M607.5,709.5V758 M611.0,709.5V758 M614.0,709.5V758 M617.5,709.5V758 M620.5,709.5V758 M624.0,709.5V758" stroke-width="1.5"/>
<path d="M594.5,758 a7.5,7.5 0 0 0 15,0" />
<path d="M600.8,765V782 M603.2,765V782" stroke-width="1"/>
<path d="M585.5,798 L602.0,782 L619.0,798" stroke-width="1.1"/>
</g>
<g fill="none" stroke="#111" stroke-width="1">
<rect x="1135.0" y="709.5" width="50" height="48.5" fill="#fff" stroke-width="1"/>
<path d="M1138.0,709.5V758 M1141.5,709.5V758 M1144.5,709.5V758 M1148.0,709.5V758 M1151.5,709.5V758 M1155.0,709.5V758 M1158.5,709.5V758 M1162.0,709.5V758 M1165.5,709.5V758 M1169.0,709.5V758 M1172.0,709.5V758 M1175.5,709.5V758 M1178.5,709.5V758 M1182.0,709.5V758" stroke-width="1.5"/>
<path d="M1152.5,758 a7.5,7.5 0 0 0 15,0" />
<path d="M1158.8,765V782 M1161.2,765V782" stroke-width="1"/>
<path d="M1143.5,798 L1160.0,782 L1177.0,798" stroke-width="1.1"/>
</g>
<g fill="none" stroke="#1faa3a" stroke-width="1">
<rect x="880.8" y="329.5" width="20.5" height="5" fill="#b6e8b0" stroke-width="1.4"/>
<path d="M890.6,335V394" stroke-width="2.4"/>
<rect x="887.5" y="393" width="6.5" height="8.5" fill="#1faa3a" rx="1"/>
<path d="M890.5,401.5 L882.8,403.1 L879.7,404.8 L877.3,406.4 L875.4,408.1 L873.8,409.8 L872.4,411.4 L871.1,413.1 L869.9,414.7 L868.9,416.4 L867.9,418.0 L867.1,419.6 L866.3,421.3 L865.6,422.9 L864.9,424.6 L864.3,426.2 L863.7,427.9 L863.2,429.6 L862.7,431.2 L862.3,432.9 L861.9,434.5 L861.5,436.1 L861.2,437.8 L861.0,439.4 L860.7,441.1 L860.5,442.8 L860.3,444.4 L860.2,446.1 L860.1,447.7 L860.0,449.4 L860.0,451.0 L860.0,452.6 L860.0,454.3 L860.0,455.9 L860.1,457.6 L860.2,459.2 L860.3,460.9 L860.4,462.6 L860.6,464.2 L860.8,465.9 L861.0,467.5 L861.2,469.1 L861.5,470.8 L861.8,472.4 L862.2,474.1 L862.5,475.8 L862.9,477.4 L863.4,479.1 L863.8,480.7 L864.3,482.4 L864.9,484.0 L865.5,485.6 L866.1,487.3 L866.7,488.9 L867.4,490.6 L868.1,492.2 L868.8,493.9 L869.6,495.6 L870.4,497.2 L871.3,498.9 L872.2,500.5 L908.8,500.5 L909.7,498.9 L910.6,497.2 L911.4,495.6 L912.2,493.9 L912.9,492.2 L913.6,490.6 L914.3,488.9 L914.9,487.3 L915.5,485.6 L916.1,484.0 L916.7,482.4 L917.2,480.7 L917.6,479.1 L918.1,477.4 L918.5,475.8 L918.8,474.1 L919.2,472.4 L919.5,470.8 L919.8,469.1 L920.0,467.5 L920.2,465.9 L920.4,464.2 L920.6,462.6 L920.7,460.9 L920.8,459.2 L920.9,457.6 L921.0,455.9 L921.0,454.3 L921.0,452.6 L921.0,451.0 L921.0,449.4 L920.9,447.7 L920.8,446.1 L920.7,444.4 L920.5,442.8 L920.3,441.1 L920.0,439.4 L919.8,437.8 L919.5,436.1 L919.1,434.5 L918.7,432.9 L918.3,431.2 L917.8,429.6 L917.3,427.9 L916.7,426.2 L916.1,424.6 L915.4,422.9 L914.7,421.3 L913.9,419.6 L913.1,418.0 L912.1,416.4 L911.1,414.7 L909.9,413.1 L908.6,411.4 L907.2,409.8 L905.6,408.1 L903.7,406.4 L901.3,404.8 L898.2,403.1 L890.5,401.5Z" fill="#d4f3cb" stroke-width="1.6"/>
<path d="M890.5,401.5 L883.4,403.1 L880.5,404.8 L878.4,406.4 L876.6,408.1 L875.1,409.8 L873.8,411.4 L872.6,413.1 L871.6,414.7 L870.6,416.4 L869.8,418.0 L869.0,419.6 L868.2,421.3 L867.5,422.9 L866.9,424.6 L866.4,426.2 L865.8,427.9 L865.4,429.6 L864.9,431.2 L864.5,432.9 L864.2,434.5 L863.9,436.1 L863.6,437.8 L863.3,439.4 L863.1,441.1 L862.9,442.8 L862.8,444.4 L862.6,446.1 L862.5,447.7 L862.5,449.4 L862.4,451.0 L862.4,452.6 L862.5,454.3 L862.5,455.9 L862.5,457.6 L862.6,459.2 L862.7,460.9 L862.8,462.6 L863.0,464.2 L863.2,465.9 L863.4,467.5 L863.6,469.1 L863.8,470.8 L864.1,472.4 L864.4,474.1 L864.8,475.8 L865.1,477.4 L865.5,479.1 L866.0,480.7 L866.4,482.4 L866.9,484.0 L867.5,485.6 L868.0,487.3 L868.6,488.9 L869.2,490.6 L869.9,492.2 L870.6,493.9 L871.3,495.6 L872.1,497.2 L872.8,498.9 L873.7,500.5 M890.5,401.5 L884.3,403.1 L881.8,404.8 L880.0,406.4 L878.4,408.1 L877.1,409.8 L876.0,411.4 L875.0,413.1 L874.1,414.7 L873.2,416.4 L872.5,418.0 L871.8,419.6 L871.1,421.3 L870.5,422.9 L870.0,424.6 L869.5,426.2 L869.1,427.9 L868.6,429.6 L868.3,431.2 L867.9,432.9 L867.6,434.5 L867.3,436.1 L867.1,437.8 L866.9,439.4 L866.7,441.1 L866.5,442.8 L866.4,444.4 L866.3,446.1 L866.2,447.7 L866.1,449.4 L866.1,451.0 L866.1,452.6 L866.1,454.3 L866.1,455.9 L866.2,457.6 L866.2,459.2 L866.3,460.9 L866.4,462.6 L866.6,464.2 L866.7,465.9 L866.9,467.5 L867.1,469.1 L867.3,470.8 L867.6,472.4 L867.8,474.1 L868.1,475.8 L868.5,477.4 L868.8,479.1 L869.2,480.7 L869.6,482.4 L870.0,484.0 L870.5,485.6 L871.0,487.3 L871.5,488.9 L872.0,490.6 L872.6,492.2 L873.2,493.9 L873.8,495.6 L874.5,497.2 L875.1,498.9 L875.9,500.5 M890.5,401.5 L885.6,403.1 L883.6,404.8 L882.1,406.4 L880.9,408.1 L879.8,409.8 L878.9,411.4 L878.1,413.1 L877.3,414.7 L876.7,416.4 L876.1,418.0 L875.5,419.6 L875.0,421.3 L874.5,422.9 L874.1,424.6 L873.7,426.2 L873.3,427.9 L873.0,429.6 L872.7,431.2 L872.4,432.9 L872.2,434.5 L872.0,436.1 L871.8,437.8 L871.6,439.4 L871.4,441.1 L871.3,442.8 L871.2,444.4 L871.1,446.1 L871.1,447.7 L871.0,449.4 L871.0,451.0 L871.0,452.6 L871.0,454.3 L871.0,455.9 L871.0,457.6 L871.1,459.2 L871.2,460.9 L871.3,462.6 L871.4,464.2 L871.5,465.9 L871.6,467.5 L871.8,469.1 L872.0,470.8 L872.1,472.4 L872.4,474.1 L872.6,475.8 L872.9,477.4 L873.1,479.1 L873.4,480.7 L873.8,482.4 L874.1,484.0 L874.5,485.6 L874.9,487.3 L875.3,488.9 L875.7,490.6 L876.2,492.2 L876.6,493.9 L877.1,495.6 L877.7,497.2 L878.2,498.9 L878.8,500.5 M890.5,401.5 L887.0,403.1 L885.6,404.8 L884.6,406.4 L883.7,408.1 L883.0,409.8 L882.3,411.4 L881.8,413.1 L881.2,414.7 L880.8,416.4 L880.4,418.0 L880.0,419.6 L879.6,421.3 L879.3,422.9 L879.0,424.6 L878.7,426.2 L878.4,427.9 L878.2,429.6 L878.0,431.2 L877.8,432.9 L877.6,434.5 L877.5,436.1 L877.3,437.8 L877.2,439.4 L877.1,441.1 L877.0,442.8 L876.9,444.4 L876.9,446.1 L876.8,447.7 L876.8,449.4 L876.8,451.0 L876.8,452.6 L876.8,454.3 L876.8,455.9 L876.8,457.6 L876.9,459.2 L876.9,460.9 L877.0,462.6 L877.0,464.2 L877.1,465.9 L877.2,467.5 L877.3,469.1 L877.5,470.8 L877.6,472.4 L877.7,474.1 L877.9,475.8 L878.1,477.4 L878.3,479.1 L878.5,480.7 L878.7,482.4 L879.0,484.0 L879.2,485.6 L879.5,487.3 L879.8,488.9 L880.1,490.6 L880.4,492.2 L880.8,493.9 L881.1,495.6 L881.5,497.2 L881.9,498.9 L882.3,500.5 M890.5,401.5 L888.7,403.1 L888.0,404.8 L887.5,406.4 L887.0,408.1 L886.7,409.8 L886.3,411.4 L886.0,413.1 L885.8,414.7 L885.5,416.4 L885.3,418.0 L885.1,419.6 L884.9,421.3 L884.8,422.9 L884.6,424.6 L884.5,426.2 L884.3,427.9 L884.2,429.6 L884.1,431.2 L884.0,432.9 L883.9,434.5 L883.8,436.1 L883.8,437.8 L883.7,439.4 L883.7,441.1 L883.6,442.8 L883.6,444.4 L883.5,446.1 L883.5,447.7 L883.5,449.4 L883.5,451.0 L883.5,452.6 L883.5,454.3 L883.5,455.9 L883.5,457.6 L883.5,459.2 L883.6,460.9 L883.6,462.6 L883.6,464.2 L883.7,465.9 L883.7,467.5 L883.8,469.1 L883.8,470.8 L883.9,472.4 L884.0,474.1 L884.1,475.8 L884.2,477.4 L884.3,479.1 L884.4,480.7 L884.5,482.4 L884.6,484.0 L884.7,485.6 L884.9,487.3 L885.0,488.9 L885.2,490.6 L885.3,492.2 L885.5,493.9 L885.7,495.6 L885.9,497.2 L886.1,498.9 L886.3,500.5 M890.5,401.5 L890.5,403.1 L890.5,404.8 L890.5,406.4 L890.5,408.1 L890.5,409.8 L890.5,411.4 L890.5,413.1 L890.5,414.7 L890.5,416.4 L890.5,418.0 L890.5,419.6 L890.5,421.3 L890.5,422.9 L890.5,424.6 L890.5,426.2 L890.5,427.9 L890.5,429.6 L890.5,431.2 L890.5,432.9 L890.5,434.5 L890.5,436.1 L890.5,437.8 L890.5,439.4 L890.5,441.1 L890.5,442.8 L890.5,444.4 L890.5,446.1 L890.5,447.7 L890.5,449.4 L890.5,451.0 L890.5,452.6 L890.5,454.3 L890.5,455.9 L890.5,457.6 L890.5,459.2 L890.5,460.9 L890.5,462.6 L890.5,464.2 L890.5,465.9 L890.5,467.5 L890.5,469.1 L890.5,470.8 L890.5,472.4 L890.5,474.1 L890.5,475.8 L890.5,477.4 L890.5,479.1 L890.5,480.7 L890.5,482.4 L890.5,484.0 L890.5,485.6 L890.5,487.3 L890.5,488.9 L890.5,490.6 L890.5,492.2 L890.5,493.9 L890.5,495.6 L890.5,497.2 L890.5,498.9 L890.5,500.5 M890.5,401.5 L892.3,403.1 L893.0,404.8 L893.5,406.4 L894.0,408.1 L894.3,409.8 L894.7,411.4 L895.0,413.1 L895.2,414.7 L895.5,416.4 L895.7,418.0 L895.9,419.6 L896.1,421.3 L896.2,422.9 L896.4,424.6 L896.5,426.2 L896.7,427.9 L896.8,429.6 L896.9,431.2 L897.0,432.9 L897.1,434.5 L897.2,436.1 L897.2,437.8 L897.3,439.4 L897.3,441.1 L897.4,442.8 L897.4,444.4 L897.5,446.1 L897.5,447.7 L897.5,449.4 L897.5,451.0 L897.5,452.6 L897.5,454.3 L897.5,455.9 L897.5,457.6 L897.5,459.2 L897.4,460.9 L897.4,462.6 L897.4,464.2 L897.3,465.9 L897.3,467.5 L897.2,469.1 L897.2,470.8 L897.1,472.4 L897.0,474.1 L896.9,475.8 L896.8,477.4 L896.7,479.1 L896.6,480.7 L896.5,482.4 L896.4,484.0 L896.3,485.6 L896.1,487.3 L896.0,488.9 L895.8,490.6 L895.7,492.2 L895.5,493.9 L895.3,495.6 L895.1,497.2 L894.9,498.9 L894.7,500.5 M890.5,401.5 L894.0,403.1 L895.4,404.8 L896.4,406.4 L897.3,408.1 L898.0,409.8 L898.7,411.4 L899.2,413.1 L899.8,414.7 L900.2,416.4 L900.6,418.0 L901.0,419.6 L901.4,421.3 L901.7,422.9 L902.0,424.6 L902.3,426.2 L902.6,427.9 L902.8,429.6 L903.0,431.2 L903.2,432.9 L903.4,434.5 L903.5,436.1 L903.7,437.8 L903.8,439.4 L903.9,441.1 L904.0,442.8 L904.1,444.4 L904.1,446.1 L904.2,447.7 L904.2,449.4 L904.2,451.0 L904.2,452.6 L904.2,454.3 L904.2,455.9 L904.2,457.6 L904.1,459.2 L904.1,460.9 L904.0,462.6 L904.0,464.2 L903.9,465.9 L903.8,467.5 L903.7,469.1 L903.5,470.8 L903.4,472.4 L903.3,474.1 L903.1,475.8 L902.9,477.4 L902.7,479.1 L902.5,480.7 L902.3,482.4 L902.0,484.0 L901.8,485.6 L901.5,487.3 L901.2,488.9 L900.9,490.6 L900.6,492.2 L900.2,493.9 L899.9,495.6 L899.5,497.2 L899.1,498.9 L898.7,500.5 M890.5,401.5 L895.4,403.1 L897.4,404.8 L898.9,406.4 L900.1,408.1 L901.2,409.8 L902.1,411.4 L902.9,413.1 L903.7,414.7 L904.3,416.4 L904.9,418.0 L905.5,419.6 L906.0,421.3 L906.5,422.9 L906.9,424.6 L907.3,426.2 L907.7,427.9 L908.0,429.6 L908.3,431.2 L908.6,432.9 L908.8,434.5 L909.0,436.1 L909.2,437.8 L909.4,439.4 L909.6,441.1 L909.7,442.8 L909.8,444.4 L909.9,446.1 L909.9,447.7 L910.0,449.4 L910.0,451.0 L910.0,452.6 L910.0,454.3 L910.0,455.9 L910.0,457.6 L909.9,459.2 L909.8,460.9 L909.7,462.6 L909.6,464.2 L909.5,465.9 L909.4,467.5 L909.2,469.1 L909.0,470.8 L908.9,472.4 L908.6,474.1 L908.4,475.8 L908.1,477.4 L907.9,479.1 L907.6,480.7 L907.2,482.4 L906.9,484.0 L906.5,485.6 L906.1,487.3 L905.7,488.9 L905.3,490.6 L904.8,492.2 L904.4,493.9 L903.9,495.6 L903.3,497.2 L902.8,498.9 L902.2,500.5 M890.5,401.5 L896.7,403.1 L899.2,404.8 L901.0,406.4 L902.6,408.1 L903.9,409.8 L905.0,411.4 L906.0,413.1 L906.9,414.7 L907.8,416.4 L908.5,418.0 L909.2,419.6 L909.9,421.3 L910.5,422.9 L911.0,424.6 L911.5,426.2 L911.9,427.9 L912.4,429.6 L912.7,431.2 L913.1,432.9 L913.4,434.5 L913.7,436.1 L913.9,437.8 L914.1,439.4 L914.3,441.1 L914.5,442.8 L914.6,444.4 L914.7,446.1 L914.8,447.7 L914.9,449.4 L914.9,451.0 L914.9,452.6 L914.9,454.3 L914.9,455.9 L914.8,457.6 L914.8,459.2 L914.7,460.9 L914.6,462.6 L914.4,464.2 L914.3,465.9 L914.1,467.5 L913.9,469.1 L913.7,470.8 L913.4,472.4 L913.2,474.1 L912.9,475.8 L912.5,477.4 L912.2,479.1 L911.8,480.7 L911.4,482.4 L911.0,484.0 L910.5,485.6 L910.0,487.3 L909.5,488.9 L909.0,490.6 L908.4,492.2 L907.8,493.9 L907.2,495.6 L906.5,497.2 L905.9,498.9 L905.1,500.5 M890.5,401.5 L897.6,403.1 L900.5,404.8 L902.6,406.4 L904.4,408.1 L905.9,409.8 L907.2,411.4 L908.4,413.1 L909.4,414.7 L910.4,416.4 L911.2,418.0 L912.0,419.6 L912.8,421.3 L913.5,422.9 L914.1,424.6 L914.6,426.2 L915.2,427.9 L915.6,429.6 L916.1,431.2 L916.5,432.9 L916.8,434.5 L917.1,436.1 L917.4,437.8 L917.7,439.4 L917.9,441.1 L918.1,442.8 L918.2,444.4 L918.4,446.1 L918.5,447.7 L918.5,449.4 L918.6,451.0 L918.6,452.6 L918.5,454.3 L918.5,455.9 L918.5,457.6 L918.4,459.2 L918.3,460.9 L918.2,462.6 L918.0,464.2 L917.8,465.9 L917.6,467.5 L917.4,469.1 L917.2,470.8 L916.9,472.4 L916.6,474.1 L916.2,475.8 L915.9,477.4 L915.5,479.1 L915.0,480.7 L914.6,482.4 L914.1,484.0 L913.5,485.6 L913.0,487.3 L912.4,488.9 L911.8,490.6 L911.1,492.2 L910.4,493.9 L909.7,495.6 L908.9,497.2 L908.2,498.9 L907.3,500.5" stroke-width="0.9"/>
<path d="M878.6,405.5H902.4 M874.8,408.7H906.2 M872.0,411.9H909.0 M869.7,415.1H911.3 M867.8,418.3H913.2 M866.2,421.5H914.8 M864.8,424.7H916.2 M863.7,427.9H917.3 M862.7,431.1H918.3 M861.3,437.4H919.7 M860.4,443.7H920.6 M860.0,450.0H921.0 M860.1,456.3H920.9 M860.4,462.6H920.6 M861.2,468.9H919.8 M862.4,475.2H918.6 M864.1,481.5H916.9 M866.3,487.8H914.7 M868.9,494.1H912.1 M872.1,500.4H908.9" stroke-width="0.9"/>
</g>
<circle cx="890.5" cy="410" r="3.2" fill="#000"/>
<path d="M890.5,325.9l3.6,3.6l-3.6,3.6l-3.6,-3.6z" fill="#c01fc0"/>
<path d="M890.5,398.9l3.6,3.6l-3.6,3.6l-3.6,-3.6z" fill="#c01fc0"/>
<path d="M860.0,452.9l3.6,3.6l-3.6,3.6l-3.6,-3.6z" fill="#c01fc0"/>
<path d="M890.5,452.9l3.6,3.6l-3.6,3.6l-3.6,-3.6z" fill="#c01fc0"/>
<path d="M872.0,496.9l3.6,3.6l-3.6,3.6l-3.6,-3.6z" fill="#c01fc0"/>
<path d="M890.5,496.9l3.6,3.6l-3.6,3.6l-3.6,-3.6z" fill="#c01fc0"/>
<path d="M908.5,496.9l3.6,3.6l-3.6,3.6l-3.6,-3.6z" fill="#c01fc0"/>
<circle cx="921" cy="461" r="29" fill="#f6ee4e" fill-opacity="0.74"/>
<path d="M920,452.9l3.6,3.6l-3.6,3.6l-3.6,-3.6z" fill="#e08a78"/>
<path d="M919.5,458.5 L919.8,472.5 L923.3,469.6 L926.8,475.2 L928.6,474 L925.4,468.4 L929.6,467.4 Z" fill="#7d6c1f"/>
<path d="M929,472.5L932.5,476L940.5,467" fill="none" stroke="#8a7a2a" stroke-width="1.4"/>
</g>
<rect x="986.5" y="558" width="130.5" height="69.5" fill="#ebebeb" stroke="#bcbcbc" stroke-width="1"/>
<path d="M1001,580V606" stroke="#555" stroke-width="1"/>
<rect x="1015.5" y="560" width="33.5" height="31.5" fill="#b7d7f3"/>
<path d="M1032.3,568.0V583.0 M1024.8,575.5H1039.8 M1029.9,570.4l2.4,-2.4l2.4,2.4 M1029.9,580.6l2.4,2.4l2.4,-2.4 M1027.2,573.1l-2.4,2.4l2.4,2.4 M1037.4,573.1l2.4,2.4l-2.4,2.4" fill="none" stroke="#333" stroke-width="1.3"/>
<path d="M1034.5,605V601H1022.5V612.5H1027" fill="none" stroke="#333" stroke-width="1.3" stroke-linejoin="round"/>
<path d="M1035.0,605.5V619.5 M1028.0,612.5H1042.0 M1032.6,607.9l2.4,-2.4l2.4,2.4 M1032.6,617.1l2.4,2.4l2.4,-2.4 M1030.4,610.1l-2.4,2.4l2.4,2.4 M1039.6,610.1l2.4,2.4l-2.4,2.4" fill="none" stroke="#333" stroke-width="1.2"/>
<path d="M1055,620L1076,599" stroke="#333" stroke-width="1.4"/><rect x="1055.5" y="600" width="7" height="7" fill="none" stroke="#333" stroke-width="1.3"/><rect x="1067.5" y="611.7" width="8" height="7.8" fill="#f2f2f2" stroke="#aaa" stroke-width="1.1"/>
<rect x="1098" y="601" width="10" height="10" rx="1" fill="#ebebeb" stroke="#aaa" stroke-width="1.1"/><rect x="1094" y="604.5" width="10" height="10" rx="1" fill="#ebebeb" stroke="#888" stroke-width="1.1"/><rect x="1090" y="608" width="11" height="10.5" rx="1" fill="#ebebeb" stroke="#444" stroke-width="1.3"/>
<path d="M108,919.8H271 M1253,919.8H1703" stroke="#c9483c" stroke-width="1.4"/>
<g clip-path="url(#cvall)" font-size="32.3" fill="#000">
<text x="1397" y="224">2 Roof</text>
<text x="1397" y="907.6">+1,780</text>
<text x="1397" y="950.2">1 First Floor</text>
<text x="99.5" y="224">of</text>
<text x="108" y="907.6">0</text>
<text x="97" y="950.2">or</text>
</g>
<rect x="116" y="568" width="12" height="36" fill="#f6f6f6" opacity="0.7"/><path d="M121.5,571V602" stroke="#f0a040" stroke-width="1.2" stroke-dasharray="5 2"/>
<rect x="1684" y="568" width="12" height="36" fill="#f6f6f6" opacity="0.7"/><path d="M1690.5,571V602" stroke="#f0a040" stroke-width="1.2" stroke-dasharray="5 2"/>
<rect x="886" y="199" width="38" height="10" fill="#fff" opacity="0.6"/><path d="M890,204.5H921" stroke="#f0a040" stroke-width="1.2" stroke-dasharray="5 2"/>
<path d="M890,968.5H921" stroke="#e58a3c" stroke-width="1.2" stroke-dasharray="5 2"/></svg>
<svg class="r" style="left:1769.5px;top:-1px;" width="150" height="28" viewBox="0 0 150 28" preserveAspectRatio="none"><path d="M6,13.5H17" stroke="#111" stroke-width="1.2"/><rect x="60.5" y="10.5" width="8" height="8" fill="none" stroke="#111" stroke-width="1.2"/><path d="M63,10.5V8H71V16H68.5" fill="none" stroke="#111" stroke-width="1.2"/><path d="M114,7L126,19M126,7L114,19" stroke="#111" stroke-width="1.3"/></svg>
<svg class="r" style="left:1868px;top:30px;" width="52" height="18" viewBox="0 0 52 18" preserveAspectRatio="none"><path d="M4,12.5H12" stroke="#222" stroke-width="2"/><rect x="22.5" y="7" width="6" height="6" fill="none" stroke="#222" stroke-width="2.2"/><path d="M25.500,5V3.500H32V10H30.500" fill="none" stroke="#666" stroke-width="1"/><path d="M40,6L46,13M46,6L40,13" stroke="#222" stroke-width="2"/></svg>
<svg class="r" style="left:0px;top:0px;" width="24" height="26" viewBox="0 0 24 26" preserveAspectRatio="none"><path d="M3.750,20.800V5.400H11.600Q14.500,12 16.300,20.800Z" fill="#1d3583"/><path d="M4.800,20.800L10.200,5.400H11.400L7.200,20.800Z" fill="#8ea4d6"/><path d="M11.600,5.400Q14.500,12 16.300,20.800H13.500Q13,12 11.600,5.400Z" fill="#2d4a9e"/></svg>
<div class="r" style="left:263.5px;top:53px;width:165px;height:37px;background:#bfdcf6;"></div>
<div class="r" style="left:299px;top:53px;width:1px;height:37px;background:#9cc6ee;"></div>
<div class="r" style="left:319px;top:53px;width:1px;height:37px;background:#9cc6ee;"></div>
<div class="r" style="left:354px;top:53px;width:1px;height:37px;background:#9cc6ee;"></div>
<div class="r" style="left:374px;top:53px;width:1px;height:37px;background:#9cc6ee;"></div>
<div class="r" style="left:409px;top:53px;width:1px;height:37px;background:#9cc6ee;"></div>
<div class="r" style="left:654px;top:53px;width:30px;height:37px;background:#bfdcf6;border:1px solid #93c2ee;box-sizing:border-box;"></div>
<div class="r" style="left:1033px;top:53px;width:30px;height:37px;background:#bfdcf6;border:1px solid #93c2ee;box-sizing:border-box;"></div>
<div class="r" style="left:72px;top:55.5px;width:1px;height:33px;background:#7e7e7e;"></div>
<div class="r" style="left:257px;top:55.5px;width:1px;height:33px;background:#7e7e7e;"></div>
<div class="r" style="left:747px;top:55.5px;width:1px;height:33px;background:#7e7e7e;"></div>
<div class="r" style="left:997px;top:55.5px;width:1px;height:33px;background:#7e7e7e;"></div>
<div class="r" style="left:1121px;top:55.5px;width:1px;height:33px;background:#7e7e7e;"></div>
<div class="r" style="left:1563px;top:55.5px;width:1px;height:33px;background:#7e7e7e;"></div>
<div class="r" style="left:5.5px;top:64px;width:1px;height:16px;background:#8a8a8a;"></div>
<div class="r" style="left:1377px;top:62px;width:1.5px;height:20px;background:#a8a8a8;"></div>
<svg class="r" style="left:8px;top:57.5px;" width="28" height="28" viewBox="-14 -14 28 28" preserveAspectRatio="none"><g fill="none" stroke="#333" stroke-width="1.4" stroke-linecap="round" stroke-linejoin="round"><path d="M-9.800,-3.600V4.800H-1.400"/><path d="M-9.300,4.300C-6.500,-3 -1.500,-6.800 3,-6.800A7.800,7.800 0 0 1 6,8.200"/></g></svg>
<svg class="r" style="left:39px;top:57.5px;" width="28" height="28" viewBox="-14 -14 28 28" preserveAspectRatio="none"><g fill="none" stroke="#b9b9b9" stroke-width="1.4" stroke-linecap="round" stroke-linejoin="round"><path d="M9.800,-3.600V4.800H1.400"/><path d="M9.300,4.300C6.500,-3 1.500,-6.800 -3,-6.800A7.800,7.800 0 0 0 -6,8.200"/></g></svg>
<svg class="r" style="left:78px;top:57.5px;" width="28" height="28" viewBox="-14 -14 28 28" preserveAspectRatio="none"><g fill="none" stroke-linecap="round"><path d="M-9,9.500H9.500 M9.500,-9V9.500" stroke="#555" stroke-width="1.300"/><path d="M-9,-5V-1" stroke="#333" stroke-width="1.300"/><path d="M-7.500,5L1.500,-4" stroke="#444" stroke-width="3.600"/><path d="M-7.500,5L1.500,-4" stroke="#e4e4e4" stroke-width="1.400"/><rect x="-3.500" y="-9.500" width="12" height="5.200" rx="1.200" transform="rotate(32 2.500 -7)" fill="#f0f0f0" stroke="#444" stroke-width="1.300"/></g><g fill="#2a7fd4"><rect x="-11" y="-11" width="3.500" height="3.500"/><rect x="7.500" y="-11" width="3.500" height="3.500"/><rect x="-11" y="7.500" width="3.500" height="3.500"/><rect x="7.500" y="7.500" width="3.500" height="3.500"/></g></svg>
<svg class="r" style="left:112px;top:57.5px;" width="28" height="28" viewBox="-14 -14 28 28" preserveAspectRatio="none"><g fill="none" stroke="#333" stroke-width="1.4" stroke-linecap="round" stroke-linejoin="round"><rect x="-10" y="3" width="17" height="7" stroke-width="1.3"/><path d="M-9,-2H-3 M-9,-2l3,-3 M-9,-2l3,3" stroke-width="1.3"/></g><text x="-2" y="0" font-size="10" fill="#222" font-weight="bold">A1</text></svg>
<svg class="r" style="left:148.5px;top:70px;" width="9" height="5" viewBox="0 0 9 5" preserveAspectRatio="none"><path d="M0,0H9L4.5,5Z" fill="#222"/></svg>
<svg class="r" style="left:165px;top:57.5px;" width="28" height="28" viewBox="-14 -14 28 28" preserveAspectRatio="none"><g fill="none" stroke="#333" stroke-width="1.4" stroke-linecap="round" stroke-linejoin="round"><circle cx="-3" cy="-3" r="6.500" stroke="#2a7fd4"/><path d="M2,2L9,9" stroke="#2a7fd4"/><circle cx="-3" cy="-3" r="3" fill="#222" stroke="none"/><path d="M8,-4V5 M8,-4l-2.500,3 M8,-4l2.500,3 M-1,9H6 M-1,9V6" stroke-width="1.3"/></g></svg>
<svg class="r" style="left:194px;top:57.5px;" width="28" height="28" viewBox="-14 -14 28 28" preserveAspectRatio="none"><g stroke-linecap="round"><path d="M-8,8L3,-3" stroke="#2a7fd4" stroke-width="4"/><path d="M0,-6L6,0 M2,-4L7,-9 M4,-2L9,-7" stroke="#333" stroke-width="1.5" fill="none"/><path d="M6.500,-9.500L9.500,-6.500" stroke="#333" stroke-width="2.5"/></g></svg>
<svg class="r" style="left:224px;top:57.5px;" width="28" height="28" viewBox="-14 -14 28 28" preserveAspectRatio="none"><g stroke-linecap="round"><path d="M-9,9L-6,6" stroke="#333" stroke-width="1.2"/><path d="M-6,6L3,-3" stroke="#2a7fd4" stroke-width="3.600"/><path d="M0,-6L6,0 M3,-3L8,-8 M5,-10L10,-5" stroke="#333" stroke-width="1.4" fill="none"/></g></svg>
<svg class="r" style="left:269px;top:57.5px;" width="28" height="28" viewBox="-14 -14 28 28" preserveAspectRatio="none"><g fill="none" stroke="#333" stroke-width="1.4" stroke-linecap="round" stroke-linejoin="round"><path d="M-7,-9V7H9Z" stroke-width="1.500"/><path d="M-3.500,0V3.500H1Z" stroke-width="1.1"/></g><path d="M-10,-9V10H9" fill="none" stroke="#e39b4a" stroke-width="1.1" stroke-dasharray="2 1.5"/></svg>
<svg class="r" style="left:303.5px;top:70px;" width="9" height="5" viewBox="0 0 9 5" preserveAspectRatio="none"><path d="M0,0H9L4.5,5Z" fill="#222"/></svg>
<svg class="r" style="left:324px;top:57.5px;" width="28" height="28" viewBox="-14 -14 28 28" preserveAspectRatio="none"><g fill="none" stroke-width="1.3"><path d="M-10,1H-3 M3,1H10 M0,-2.500V4.500" stroke="#333"/><path d="M1.500,-5L4,-2L9.500,-9.500" stroke="#333" stroke-width="1.400"/><path d="M-10,8H10" stroke="#2a7fd4" stroke-dasharray="3 1.5"/></g></svg>
<svg class="r" style="left:359.5px;top:70px;" width="9" height="5" viewBox="0 0 9 5" preserveAspectRatio="none"><path d="M0,0H9L4.5,5Z" fill="#222"/></svg>
<svg class="r" style="left:380px;top:57.5px;" width="28" height="28" viewBox="-14 -14 28 28" preserveAspectRatio="none"><g fill="none" stroke="#333" stroke-width="1.4" stroke-linecap="round" stroke-linejoin="round"><rect x="-8" y="0" width="13" height="8" rx="1" stroke-width="1.2"/></g><path d="M-10,-10L-4,-8L-6.500,-6.500L-3.500,-3.500L-5,-2L-8,-5L-9.500,-3Z" fill="#222"/><text x="-6.500" y="7" font-size="6.500" font-weight="bold" fill="#222">XY</text><path d="M7.500,2.500V3.500M7.500,6V7" stroke="#222" stroke-width="1.5"/></svg>
<svg class="r" style="left:414.5px;top:70px;" width="9" height="5" viewBox="0 0 9 5" preserveAspectRatio="none"><path d="M0,0H9L4.5,5Z" fill="#222"/></svg>
<svg class="r" style="left:433px;top:57.5px;" width="28" height="28" viewBox="-14 -14 28 28" preserveAspectRatio="none"><g fill="none" stroke="#333" stroke-width="1.4" stroke-linecap="round" stroke-linejoin="round"><path d="M-10,-5H10 M-10,5H10 M-5,-10V10 M5,-10V10" stroke-width="1.2"/></g><g fill="#222"><circle cx="-5" cy="-5" r="2.200"/><circle cx="5" cy="-5" r="2.200"/><circle cx="-5" cy="5" r="2.200"/><circle cx="5" cy="5" r="2.200"/></g></svg>
<svg class="r" style="left:469.5px;top:70px;" width="9" height="5" viewBox="0 0 9 5" preserveAspectRatio="none"><path d="M0,0H9L4.5,5Z" fill="#222"/></svg>
<svg class="r" style="left:483px;top:57.5px;" width="28" height="28" viewBox="-14 -14 28 28" preserveAspectRatio="none"><path d="M-10,-2L-1,-6L10,2L1,6Z M-4.500,-4L6,4 M-5,2L5,-2" fill="#dbe6f3" stroke="#b8cbe3" stroke-width="1"/></svg>
<svg class="r" style="left:514px;top:57.5px;" width="28" height="28" viewBox="-14 -14 28 28" preserveAspectRatio="none"><path d="M-3,-10L4,-5V10L-3,4Z M0.500,-7.500V7" fill="#dbe6f3" stroke="#b8cbe3" stroke-width="1"/></svg>
<svg class="r" style="left:548px;top:57.5px;" width="28" height="28" viewBox="-14 -14 28 28" preserveAspectRatio="none"><rect x="-6" y="-6.500" width="17" height="17" rx="2" fill="none" stroke="#2a7fd4" stroke-width="1.2"/><rect x="-10" y="-10" width="17" height="17" rx="1.5" fill="#f0f0f0" stroke="#333" stroke-width="1.4"/><path d="M-7,4V-7H4" fill="none" stroke="#555" stroke-width="1"/></svg>
<svg class="r" style="left:584.5px;top:70px;" width="9" height="5" viewBox="0 0 9 5" preserveAspectRatio="none"><path d="M0,0H9L4.5,5Z" fill="#222"/></svg>
<svg class="r" style="left:604px;top:57.5px;" width="28" height="28" viewBox="-14 -14 28 28" preserveAspectRatio="none"><g fill="none" stroke="#c4c4c4" stroke-width="1.3"><path d="M-6,10V1.500Q-6,-0.500 -4,-0.500H-2.500A4,4 0 1 1 2.500,-0.500H4Q6,-0.500 6,1.500V10Z"/></g></svg>
<svg class="r" style="left:639.5px;top:70px;" width="9" height="5" viewBox="0 0 9 5" preserveAspectRatio="none"><path d="M0,0H9L4.5,5Z" fill="#9a9a9a"/></svg>
<svg class="r" style="left:654.5px;top:57.5px;" width="28" height="28" viewBox="-14 -14 28 28" preserveAspectRatio="none"><g fill="none" stroke="#333" stroke-width="1.3"><path d="M-7,-8L7,-4 L4,4 L-8,1Z"/><path d="M-10,5H-1V10H-10Z M-8,10L-5,5 M-5,10L-2,5" stroke-width="1.1"/></g><rect x="-9" y="-10" width="3.500" height="3.500" fill="#f0f0f0" stroke="#333"/><rect x="6" y="-6" width="3.500" height="3.500" fill="#f0f0f0" stroke="#333"/><rect x="1" y="1" width="7" height="7" fill="#1a73e8"/><path d="M9.500,0l2,-2 M10,5h2.500 M9.500,9l2,2" stroke="#2a7fd4" stroke-width="1"/></svg>
<svg class="r" style="left:684px;top:57.5px;" width="28" height="28" viewBox="-14 -14 28 28" preserveAspectRatio="none"><g fill="none" stroke="#333" stroke-width="1.4" stroke-linecap="round" stroke-linejoin="round"><path d="M-10,9V-6H10V9" stroke-width="1.4"/><path d="M-10,-6H10" stroke-width="2.200"/><path d="M-6,-5V-1 M-2,-5V-2.500 M2,-5V-1 M6,-5V-2.500" stroke-width="1"/></g><text x="-7.500" y="8" font-size="10" fill="#222" font-weight="bold" letter-spacing="1">12</text></svg>
<svg class="r" style="left:714px;top:57.5px;" width="28" height="28" viewBox="-14 -14 28 28" preserveAspectRatio="none"><g fill="none" stroke="#333" stroke-width="1.4" stroke-linecap="round" stroke-linejoin="round"><circle cx="0" cy="0" r="3.500"/><path d="M-8,-8L-2.500,-2.500 M8,-8L2.500,-2.500 M-8,8L-2.500,2.500 M8,8L2.500,2.500" stroke-width="1.6"/></g></svg>
<svg class="r" style="left:754px;top:57.5px;" width="28" height="28" viewBox="-14 -14 28 28" preserveAspectRatio="none"><g transform="scale(0.92)"><g fill="none" stroke="#333" stroke-width="1.4" stroke-linecap="round" stroke-linejoin="round"><path d="M-9,7L7,-3 M-9,-3L7,7" stroke-width="1.5"/><circle cx="8" cy="-4.500" r="2.800"/><circle cx="8" cy="7.500" r="2.800"/></g><path d="M-10,-11V11" stroke="#2a7fd4" stroke-width="1.1" stroke-dasharray="4 3"/></g></svg>
<svg class="r" style="left:784px;top:57.5px;" width="28" height="28" viewBox="-14 -14 28 28" preserveAspectRatio="none"><g transform="scale(0.92)"><g fill="none" stroke="#333" stroke-width="1.4" stroke-linecap="round" stroke-linejoin="round"><path d="M-9,-3L-3,-8L4,-3L1,2H-6Z" stroke-width="1.5"/><path d="M1,0L10,9" stroke-width="2.400"/></g></g></svg>
<svg class="r" style="left:814px;top:57.5px;" width="28" height="28" viewBox="-14 -14 28 28" preserveAspectRatio="none"><g fill="none" stroke="#c9c9c9" stroke-width="1.1"><path d="M0,9V-5 M-3,-2L0,-5L3,-2 M-4,3V9 M4,3V9 M-8,6V9 M8,6V9"/><path d="M-10,-9H10" stroke="#bcd5ee"/></g></svg>
<svg class="r" style="left:843px;top:57.5px;" width="28" height="28" viewBox="-14 -14 28 28" preserveAspectRatio="none"><g fill="none" stroke="#333" stroke-width="1.4" stroke-linecap="round" stroke-linejoin="round"><path d="M-7,11V-6H11 M-11,7H-3 M7,-10V-2" stroke-width="1.4"/></g></svg>
<svg class="r" style="left:873px;top:57.5px;" width="28" height="28" viewBox="-14 -14 28 28" preserveAspectRatio="none"><g fill="none" stroke="#333" stroke-width="1.4" stroke-linecap="round" stroke-linejoin="round"><path d="M-7,10C-7,0 0,-6 10,-7 M-10,7H-3 M7,-11V-3" stroke-width="1.4"/><path d="M-7,10L10,-7" stroke-width="0.6" stroke="#999"/></g></svg>
<svg class="r" style="left:904px;top:57.5px;" width="28" height="28" viewBox="-14 -14 28 28" preserveAspectRatio="none"><g fill="none" stroke="#c9c9c9" stroke-width="1.1"><rect x="-10" y="-10" width="20" height="20"/><path d="M-10,0H10 M0,-10V10 M-5,-3V-8 M-7,-6L-5,-8L-3,-6 M3,5H8 M6,3L8,5L6,7"/></g></svg>
<svg class="r" style="left:934px;top:57.5px;" width="28" height="28" viewBox="-14 -14 28 28" preserveAspectRatio="none"><g fill="none" stroke="#333" stroke-width="1.4" stroke-linecap="round" stroke-linejoin="round"><rect x="-10" y="-11" width="20" height="21" stroke="#aaa" stroke-width="1"/><path d="M-11,1L0,-9L11,1 M-7,-2V10H7V-2" stroke-width="1.900" stroke="#222"/></g></svg>
<svg class="r" style="left:964px;top:57.5px;" width="28" height="28" viewBox="-14 -14 28 28" preserveAspectRatio="none"><g fill="none" stroke="#333" stroke-width="1.4" stroke-linecap="round" stroke-linejoin="round"><path d="M-9,-2V9H1V5H9L11,0H3V-6H-5Z M-5,-6L-3,-10H9L7,-6 M9,-10V-3 M3,0L5,-4" stroke-width="1.4"/></g></svg>
<svg class="r" style="left:1002px;top:57.5px;" width="28" height="28" viewBox="-14 -14 28 28" preserveAspectRatio="none"><g fill="none" stroke="#222" stroke-width="1.3"><path d="M-10,9H10V-1H-2V-6H-10Z M-10,-1H-2 M-10,4H10 M-6,-6V-1 M-2,-1V4 M4,-1V4 M-6,4V9 M0,4V9 M6,4V9"/><rect x="-8" y="-10.500" width="6" height="2.500" fill="#222"/></g></svg>
<svg class="r" style="left:1034px;top:57.5px;" width="28" height="28" viewBox="-14 -14 28 28" preserveAspectRatio="none"><g fill="none" stroke="#222" stroke-width="1.3"><rect x="-2.500" y="-8.500" width="11" height="11"/><circle cx="3" cy="-3" r="2.300" stroke="#777" fill="#9db7d1"/><path d="M-8,-3V9H4" stroke="#8fa3b8"/></g><g fill="#f0f0f0" stroke="#222" stroke-width="1.2"><rect x="-4" y="-10" width="3" height="3"/><rect x="7" y="-10" width="3" height="3"/><rect x="-4" y="1" width="3" height="3"/><rect x="7" y="1" width="3" height="3"/></g><rect x="-9.500" y="7.500" width="3" height="3" fill="#9db7d1" stroke="#8fa3b8"/><rect x="2.500" y="7.500" width="3" height="3" fill="#9db7d1" stroke="#8fa3b8"/></svg>
<svg class="r" style="left:1067px;top:57.5px;" width="28" height="28" viewBox="-14 -14 28 28" preserveAspectRatio="none"><g fill="none" stroke-width="1.3"><path d="M-10,8V0L-4,-6L1,-1V8Z M-4,-6L4,-3" stroke="#333"/><path d="M0,-9L10,-2L4,9L-5,2Z" stroke="#2a7fd4" stroke-width="1.5" fill="#e6eef8" fill-opacity="0.5"/><path d="M-1,-6L7,-1L3,6L-4,1Z" stroke="#333"/></g></svg>
<svg class="r" style="left:1103.5px;top:70px;" width="9" height="5" viewBox="0 0 9 5" preserveAspectRatio="none"><path d="M0,0H9L4.5,5Z" fill="#222"/></svg>
<svg class="r" style="left:1128px;top:57.5px;" width="28" height="28" viewBox="-14 -14 28 28" preserveAspectRatio="none"><g transform="scale(0.92)"><g fill="none" stroke-width="1.4"><ellipse cx="-1" cy="5" rx="9.500" ry="4" stroke="#2a7fd4"/><path d="M-4,5L-2,0L8,-10L11,-7L1,3Z" stroke="#333" fill="#f0f0f0"/></g></g></svg>
<svg class="r" style="left:1158px;top:57.5px;" width="28" height="28" viewBox="-14 -14 28 28" preserveAspectRatio="none"><g transform="scale(0.92)"><g fill="none" stroke="#333" stroke-width="1.4" stroke-linecap="round" stroke-linejoin="round"><path d="M0,-10L2.900,-3.200L10,-2.600L4.600,2.200L6.300,9.300L0,5.500L-6.300,9.300L-4.600,2.200L-10,-2.600L-2.900,-3.200Z" stroke-width="1.400"/></g></g></svg>
<svg class="r" style="left:1188px;top:57.5px;" width="28" height="28" viewBox="-14 -14 28 28" preserveAspectRatio="none"><g transform="scale(0.92)"><g fill="none" stroke="#333" stroke-width="1.4" stroke-linecap="round" stroke-linejoin="round"><rect x="-10" y="-10" width="20" height="20" stroke-width="1.3"/><path d="M-10,-7.500H10" stroke-width="2"/><path d="M-8,8L0,-4V8 M0,-4L7,2V8 M3,8V4H5.500V8" stroke-width="1.1"/></g></g></svg>
<svg class="r" style="left:1218px;top:57.5px;" width="28" height="28" viewBox="-14 -14 28 28" preserveAspectRatio="none"><g transform="scale(0.92)"><g fill="none" stroke="#333" stroke-width="1.4" stroke-linecap="round" stroke-linejoin="round"><path d="M-6,5H1 M-6,5A4.500,4.500 0 0 1 -7,-3.500A6,6 0 0 1 4,-7A5,5 0 0 1 10,-1" stroke-width="1.4"/></g><rect x="1.500" y="1.500" width="9.500" height="8.500" fill="#fff" stroke="#2a7fd4" stroke-width="1.3"/><path d="M1.500,3.500H11" stroke="#2a7fd4" stroke-width="1.8"/><path d="M3.500,6H9M3.500,8H9" stroke="#2a7fd4" stroke-width="0.9"/></g></svg>
<svg class="r" style="left:1248px;top:57.5px;" width="28" height="28" viewBox="-14 -14 28 28" preserveAspectRatio="none"><g transform="scale(0.92)"><g fill="none" stroke="#333" stroke-width="1.4" stroke-linecap="round" stroke-linejoin="round"><path d="M0,6H-10V-6H-6L-4.500,-9H3L4.500,-6H9V0" stroke-width="1.400"/><circle cx="-1" cy="-1" r="4"/></g><rect x="1.500" y="1.500" width="9.500" height="8.500" fill="#fff" stroke="#2a7fd4" stroke-width="1.3"/><path d="M1.500,3.500H11" stroke="#2a7fd4" stroke-width="1.8"/><path d="M3.500,6H9M3.500,8H9" stroke="#2a7fd4" stroke-width="0.9"/></g></svg>
<svg class="r" style="left:1278px;top:57.5px;" width="28" height="28" viewBox="-14 -14 28 28" preserveAspectRatio="none"><g transform="scale(0.92)"><g fill="none" stroke="#c6c6c6" stroke-width="1.2"><path d="M-7,-9C-10,-4 -10,-1 -7,-1C-4,-1 -4,-4 -7,-9Z"/><path d="M5,-10V-3 M1,-3H9V2H1Z M0,2L-3,9 M3,2L1,9 M6,2V9 M9,2L10,9 M-9,10H10"/></g></g></svg>
<svg class="r" style="left:1307px;top:57.5px;" width="28" height="28" viewBox="-14 -14 28 28" preserveAspectRatio="none"><g transform="scale(0.92)"><g fill="none" stroke="#222" stroke-width="1.4"><path d="M-9,-5L-5,-9H10L6,-5Z M-9,-1L-6,-4.500 M6,-1L10,-5 M-9,-1H6 M-9,3L-6,-0.500 M6,3L10,-1 M-9,3H6"/></g><g fill="#222"><rect x="-10" y="6" width="5.500" height="4"/><rect x="-3" y="6" width="5.500" height="4"/><rect x="4" y="6" width="5.500" height="4"/></g></g></svg>
<svg class="r" style="left:1338px;top:57.5px;" width="28" height="28" viewBox="-14 -14 28 28" preserveAspectRatio="none"><g transform="scale(0.92)"><g fill="none" stroke="#333" stroke-width="1.4" stroke-linecap="round" stroke-linejoin="round"><path d="M-10,10V-9H10V10" stroke-width="1.3"/><path d="M-10,-8.500H10" stroke-width="2.200"/><path d="M0,-5V9 M-7,2H7 M-5,-3L5,7 M5,-3L-5,7" stroke-width="1.200"/></g></g></svg>
<svg class="r" style="left:1385px;top:57.5px;" width="28" height="28" viewBox="-14 -14 28 28" preserveAspectRatio="none"><g fill="none" stroke="#333" stroke-width="1.4" stroke-linecap="round" stroke-linejoin="round"><rect x="-10.500" y="-10" width="21" height="20" stroke-width="1.4"/><path d="M-10.500,-8H10.500" stroke-width="2.600"/><path d="M-7,7V-4H-2V0H7V7Z" stroke-width="1.5"/><path d="M3,2V6M6,2V6M3,4H6" stroke-width="1.2"/></g></svg>
<svg class="r" style="left:1425.5px;top:70px;" width="9" height="5" viewBox="0 0 9 5" preserveAspectRatio="none"><path d="M0,0H9L4.5,5Z" fill="#222"/></svg>
<svg class="r" style="left:1445px;top:57.5px;" width="28" height="28" viewBox="-14 -14 28 28" preserveAspectRatio="none"><g fill="none" stroke="#333" stroke-width="1.4" stroke-linecap="round" stroke-linejoin="round"><rect x="-10.500" y="-10" width="21" height="20" stroke-width="1.4"/><path d="M-10.500,-8H10.500" stroke-width="2.600"/><path d="M-6,-1L-3,-4.500H6.500L3.500,-1Z M-6,-1V7H3.500V-1 M3.500,7L6.500,3.500V-4.500" stroke-width="1.300"/></g></svg>
<svg class="r" style="left:1485.5px;top:70px;" width="9" height="5" viewBox="0 0 9 5" preserveAspectRatio="none"><path d="M0,0H9L4.5,5Z" fill="#222"/></svg>
<svg class="r" style="left:1505px;top:57.5px;" width="28" height="28" viewBox="-14 -14 28 28" preserveAspectRatio="none"><g fill="none" stroke="#333" stroke-width="1.4" stroke-linecap="round" stroke-linejoin="round"><rect x="-10.500" y="-10" width="21" height="20" stroke-width="1.4"/><path d="M-10.500,-8H10.500" stroke-width="2.600"/><rect x="-7.500" y="-4" width="15" height="11" stroke-width="1.4"/><rect x="1" y="2" width="6" height="4" fill="#777" stroke-width="1"/></g></svg>
<svg class="r" style="left:1545.5px;top:70px;" width="9" height="5" viewBox="0 0 9 5" preserveAspectRatio="none"><path d="M0,0H9L4.5,5Z" fill="#222"/></svg>
<span class="t" style="left:1572.5px;top:62.5px;font-size:14px;line-height:18px;color:#111;letter-spacing:-0.588px;">Go</span>
<svg class="r" style="left:1600.5px;top:70px;" width="9" height="5" viewBox="0 0 9 5" preserveAspectRatio="none"><path d="M0,0H9L4.5,5Z" fill="#222"/></svg>
<div class="r" style="left:227px;top:95px;width:1px;height:69px;background:#b4b4b4;"></div>
<div class="r" style="left:449px;top:95px;width:1px;height:69px;background:#b4b4b4;"></div>
<div class="r" style="left:671px;top:95px;width:1px;height:69px;background:#b4b4b4;"></div>
<div class="r" style="left:893px;top:95px;width:1px;height:69px;background:#b4b4b4;"></div>
<div class="r" style="left:1115px;top:95px;width:1px;height:69px;background:#b4b4b4;"></div>
<div class="r" style="left:1337px;top:95px;width:1px;height:69px;background:#b4b4b4;"></div>
<div class="r" style="left:1559px;top:95px;width:1px;height:69px;background:#b4b4b4;"></div>
<div class="r" style="left:1781px;top:95px;width:1px;height:69px;background:#b4b4b4;"></div>
<div class="r" style="left:5px;top:116px;width:1px;height:27px;background:#9a9a9a;"></div>
<span class="t n" style="left:11.0px;top:96.5px;font-size:11.5px;line-height:15px;color:#222;letter-spacing:-0.424px;">Main:</span>
<span class="t n" style="left:233.0px;top:96.5px;font-size:11.5px;line-height:15px;color:#222;letter-spacing:-0.660px;">Layer:</span>
<span class="t n" style="left:455.0px;top:96.5px;font-size:11.5px;line-height:15px;color:#222;letter-spacing:-0.538px;">ID and Properties:</span>
<span class="t n" style="left:677.0px;top:96.5px;font-size:11.5px;line-height:15px;color:#222;letter-spacing:-0.548px;">Element:</span>
<span class="t n" style="left:899.0px;top:96.5px;font-size:11.5px;line-height:15px;color:#222;letter-spacing:-0.452px;">Geometry Method:</span>
<span class="t n" style="left:1121.0px;top:96.5px;font-size:11.5px;line-height:15px;color:#222;letter-spacing:-0.589px;">Floor Plan and Section:</span>
<span class="t n" style="left:1343.0px;top:96.5px;font-size:11.5px;line-height:15px;color:#222;letter-spacing:-0.605px;">Linked Stories:</span>
<span class="t n" style="left:1565.0px;top:96.5px;font-size:11.5px;line-height:15px;color:#222;letter-spacing:-0.503px;">Bottom and Top:</span>
<span class="t n" style="left:1787.0px;top:96.5px;font-size:11.5px;line-height:15px;color:#222;letter-spacing:-0.913px;">Size:</span>
<span class="t n" style="left:11.0px;top:116.5px;font-size:11.5px;line-height:15px;color:#222;letter-spacing:-0.568px;">All Selected: 1</span>
<div class="r" style="left:12px;top:135px;width:47px;height:21px;background:#e1e1e1;border:1px solid #adadad;box-sizing:border-box;"></div>
<div class="r" style="left:63px;top:135px;width:47px;height:21px;background:#e1e1e1;border:1px solid #adadad;box-sizing:border-box;"></div>
<div class="r" style="left:113px;top:135px;width:47px;height:21px;background:#bfdcf6;border:1px solid #0a64ad;box-sizing:border-box;"></div>
<svg class="r" style="left:50px;top:141.5px;" width="5" height="8" viewBox="0 0 5 8" preserveAspectRatio="none"><path d="M0,0L4,4L0,8Z" fill="#222"/></svg>
<svg class="r" style="left:101px;top:141.5px;" width="5" height="8" viewBox="0 0 5 8" preserveAspectRatio="none"><path d="M0,0L4,4L0,8Z" fill="#222"/></svg>
<svg class="r" style="left:14px;top:137px;" width="34" height="17" viewBox="0 0 34 17" preserveAspectRatio="none"><path d="M6,6.500H21V11.500H8" fill="none" stroke="#222" stroke-width="1.2" stroke-dasharray="3 1.5"/><path d="M6,15L10.500,8L18,6.500" fill="none" stroke="#222" stroke-width="1.6"/><rect x="4.500" y="13" width="3.500" height="3.500" fill="#222"/><rect x="9" y="6.500" width="3.500" height="3.500" fill="#222"/></svg>
<svg class="r" style="left:66px;top:137px;" width="34" height="17" viewBox="0 0 34 17" preserveAspectRatio="none"><rect x="5.500" y="3.500" width="16" height="11" fill="none" stroke="#222" stroke-width="1.3" stroke-dasharray="3.5 2"/><path d="M20,2.500L27,8.500L23.500,8.800L25.500,12.500L24,13.200L22.200,9.600L20,11.500Z" fill="#222"/></svg>
<svg class="r" style="left:123px;top:137px;" width="28" height="18" viewBox="0 0 28 18" preserveAspectRatio="none"><path d="M9,4.500A6,6 0 1 1 6.500,10.500" fill="none" stroke="#333" stroke-width="1.5" transform="rotate(-20 13 9)"/><path d="M11.500,7.500A3,3 0 1 1 10,10.500" fill="none" stroke="#333" stroke-width="1.3" transform="rotate(-20 13 9)"/><circle cx="13.500" cy="3.500" r="2" fill="#333"/><path d="M6,8L20,16" stroke="#333" stroke-width="1.3"/></svg>
<div class="r" style="left:163px;top:122px;width:57px;height:33px;background:#e1e1e1;border:1px solid #adadad;box-sizing:border-box;"></div>
<div class="r" style="left:206px;top:126px;width:1px;height:26px;background:#c4c4c4;"></div>
<svg class="r" style="left:208.5px;top:136.5px;" width="8" height="5" viewBox="0 0 8 5" preserveAspectRatio="none"><path d="M0,0H8L4,5Z" fill="#222"/></svg>
<svg class="r" style="left:171px;top:124px;" width="30" height="30" viewBox="0 0 30 30" preserveAspectRatio="none"><path d="M11,20.500C8,18 7.500,15 8.500,12.500A6.500,6.500 0 0 1 21,12.500C22,15 21.500,18 18.500,20.500Z" fill="none" stroke="#333" stroke-width="1.2"/><path d="M11.500,23H18M12.500,25.500H17" stroke="#333" stroke-width="1.2"/><path d="M11.500,15l2,-2l1.500,3l1.500,-3l2,2" fill="none" stroke="#333" stroke-width="1"/><path d="M14.800,1.500V5 M5.500,5L8,7.500 M24,5L21.500,7.500 M2,13H5.500 M27.500,13H24 M5,21L7.500,19 M24.500,21L22,19" stroke="#333" stroke-width="1.2"/></svg>
<div class="r" style="left:234px;top:122px;width:209px;height:33px;background:#e1e1e1;border:1px solid #adadad;box-sizing:border-box;"></div>
<svg class="r" style="left:243px;top:131px;" width="20" height="16" viewBox="0 0 20 16" preserveAspectRatio="none"><path d="M1,8Q10,-1.500 19,8Q10,17.500 1,8Z" fill="none" stroke="#333" stroke-width="1.2"/><circle cx="10" cy="8" r="3.300" fill="none" stroke="#333" stroke-width="1.2"/><circle cx="10" cy="8" r="1.200" fill="#333"/></svg>
<span class="t" style="left:267.0px;top:130.5px;font-size:13.5px;line-height:18px;color:#1a1a1a;letter-spacing:0.234px;">5 - Interior.Lights</span>
<svg class="r" style="left:433px;top:135px;" width="5" height="8" viewBox="0 0 5 8" preserveAspectRatio="none"><path d="M0,0L4,4L0,8Z" fill="#222"/></svg>
<div class="r" style="left:455px;top:125px;width:160px;height:28px;background:#fff;border:1px solid #7a7a7a;box-sizing:border-box;"></div>
<span class="t" style="left:460.0px;top:130.5px;font-size:13.5px;line-height:18px;color:#1a1a1a;letter-spacing:-0.348px;">LI - 002</span>
<div class="r" style="left:618px;top:122px;width:47px;height:33px;background:#e1e1e1;border:1px solid #adadad;box-sizing:border-box;"></div>
<svg class="r" style="left:626px;top:129px;" width="18" height="20" viewBox="0 0 18 20" preserveAspectRatio="none"><rect x="1.500" y="1.500" width="14" height="17" rx="1.5" fill="none" stroke="#333" stroke-width="1.3"/><path d="M4,6H13M4,9H13M4,12H13M4,15H10" stroke="#333" stroke-width="1.2"/></svg>
<svg class="r" style="left:655px;top:135px;" width="5" height="8" viewBox="0 0 5 8" preserveAspectRatio="none"><path d="M0,0L4,4L0,8Z" fill="#222"/></svg>
<span class="t n" style="left:677.0px;top:130.5px;font-size:13.5px;line-height:18px;color:#111;font-weight:bold;letter-spacing:-0.185px;">Pendant Lamp 23</span>
<div class="r" style="left:871px;top:122px;width:16px;height:33px;background:#e1e1e1;border:1px solid #adadad;box-sizing:border-box;"></div>
<svg class="r" style="left:877px;top:135px;" width="5" height="8" viewBox="0 0 5 8" preserveAspectRatio="none"><path d="M0,0L4,4L0,8Z" fill="#222"/></svg>
<svg class="r" style="left:911px;top:125px;" width="30" height="30" viewBox="0 0 30 30" preserveAspectRatio="none"><g fill="none" stroke="#d2d2d2" stroke-width="1"><path d="M7,10L12,4.500L21,6.500L21,20L9,22Z M7,10L16,12L21,6.500 M16,12V21"/><rect x="11" y="15" width="4" height="4" fill="#bdbdbd" stroke="none"/></g></svg>
<svg class="r" style="left:965px;top:125px;" width="30" height="30" viewBox="0 0 30 30" preserveAspectRatio="none"><g fill="none" stroke="#d2d2d2" stroke-width="1"><path d="M7,10L12,4.500L21,6.500L21,20L9,22Z M7,10L16,12L21,6.500 M16,12V21"/><rect x="12" y="18" width="3.500" height="3.500" fill="#bdbdbd" stroke="none"/><rect x="22" y="19.500" width="3.500" height="3.500" fill="#bdbdbd" stroke="none"/><path d="M15,20L22,21"/></g></svg>
<svg class="r" style="left:1017px;top:125px;" width="30" height="30" viewBox="0 0 30 30" preserveAspectRatio="none"><g fill="none" stroke="#d2d2d2" stroke-width="1"><path d="M7,10L12,4.500L21,6.500L21,20L9,22Z M7,10L16,12L21,6.500 M16,12V21"/><rect x="5" y="20" width="3.500" height="3.500" fill="#bdbdbd" stroke="none"/><rect x="22" y="15" width="3.500" height="3.500" fill="#bdbdbd" stroke="none"/><path d="M8,21L22,17" stroke-dasharray="2 1.5"/></g></svg>
<svg class="r" style="left:1069px;top:125px;" width="30" height="30" viewBox="0 0 30 30" preserveAspectRatio="none"><g fill="none" stroke="#d2d2d2" stroke-width="1"><path d="M7,10L12,4.500L21,6.500L21,20L9,22Z M7,10L16,12L21,6.500 M16,12V21"/><rect x="5" y="14" width="3" height="3" fill="#bdbdbd" stroke="none"/><rect x="12" y="22" width="3" height="3" fill="#bdbdbd" stroke="none"/><rect x="22" y="19" width="3" height="3" fill="#bdbdbd" stroke="none"/><path d="M6.500,16L13,23L23,20.500"/></g></svg>
<div class="r" style="left:1122px;top:122px;width:209px;height:33px;background:#e1e1e1;border:1px solid #adadad;box-sizing:border-box;"></div>
<svg class="r" style="left:1128px;top:129px;" width="22" height="22" viewBox="0 0 22 22" preserveAspectRatio="none"><circle cx="11" cy="11" r="9" fill="none" stroke="#222" stroke-width="1.3"/><path d="M4.800,4.800L17.200,17.200M17.200,4.800L4.800,17.200" stroke="#222" stroke-width="1.3"/></svg>
<span class="t" style="left:1155.0px;top:130.5px;font-size:13.5px;line-height:18px;color:#1a1a1a;letter-spacing:0.086px;">Floor Plan and Section...</span>
<svg class="r" style="left:1321px;top:135px;" width="5" height="8" viewBox="0 0 5 8" preserveAspectRatio="none"><path d="M0,0L4,4L0,8Z" fill="#222"/></svg>
<span class="t" style="left:1343.0px;top:118.0px;font-size:13.5px;line-height:18px;color:#1a1a1a;letter-spacing:-0.153px;">Home:</span>
<span class="t" style="left:1454.0px;top:143.5px;font-size:13.5px;line-height:18px;color:#1a1a1a;letter-spacing:0.017px;">1. First Floor</span>
<div class="r" style="left:1537px;top:144px;width:15px;height:16px;background:#e1e1e1;border:1px solid #adadad;box-sizing:border-box;"></div>
<svg class="r" style="left:1542.5px;top:148.5px;" width="4.5" height="7" viewBox="0 0 4.5 7" preserveAspectRatio="none"><path d="M0,0L3.5,3.5L0,7Z" fill="#222"/></svg>
<svg class="r" style="left:1566px;top:124px;" width="52" height="42" viewBox="0 0 52 42" preserveAspectRatio="none"><path d="M12.400,21.500V4H23.800" stroke="#333" stroke-width="1.400" fill="none"/><path d="M23.500,5.500l-4,5.500a4,2 0 0 0 8,0z" fill="#f0f0f0" stroke="#333" stroke-width="1.100"/><path d="M26.500,4H41 M24.500,24H41 M28.500,34.800H41" stroke="#444" stroke-width="1.200" stroke-dasharray="1.600 1.400"/><path d="M3,19.500H20L24.500,23.700H8Z" fill="#f0f0f0" stroke="#333" stroke-width="1.200"/><path d="M2,29.700H23.500L28.500,35H6Z" fill="#8c8c8c"/><path d="M43.500,5V21 M43.500,27V33" stroke="#222" stroke-width="1.400"/><path d="M41,7.500l2.500,-4l2.500,4z M41,20.500l2.500,3.500l2.500,-3.500z M41,28l2.500,-3.500l2.500,3.500z M41,32l2.500,3.500l2.500,-3.500z" fill="#222"/></svg>
<div class="r" style="left:1618px;top:140px;width:134px;height:23px;background:#fff;border:1px solid #7a7a7a;box-sizing:border-box;"></div>
<span class="t" style="left:1623.0px;top:143.5px;font-size:13.5px;line-height:18px;color:#1a1a1a;letter-spacing:-0.382px;">173,44</span>
<div class="r" style="left:1759px;top:131px;width:16px;height:17px;background:#e1e1e1;border:1px solid #adadad;box-sizing:border-box;"></div>
<svg class="r" style="left:1765px;top:136px;" width="4.5" height="7" viewBox="0 0 4.5 7" preserveAspectRatio="none"><path d="M0,0L3.5,3.5L0,7Z" fill="#222"/></svg>
<div class="r" style="left:108px;top:166.5px;width:392px;height:26.5px;background:#dadada;"></div>
<div class="r" style="left:500px;top:166.5px;width:360px;height:26.5px;background:#fcfcfc;"></div>
<div class="r" style="left:860px;top:166.5px;width:360px;height:26.5px;background:#dadada;"></div>
<div class="r" style="left:1220px;top:166.5px;width:359px;height:26.5px;background:#dadada;"></div>
<div class="r" style="left:1579px;top:166.5px;width:124px;height:26.5px;background:#e5e5e5;"></div>
<div class="r" style="left:108px;top:164.5px;width:1595px;height:2px;background:#f7f7f7;"></div>
<div class="r" style="left:139px;top:167px;width:1px;height:25px;background:#c8c8c8;"></div>
<div class="r" style="left:859.5px;top:167px;width:1px;height:25px;background:#c4c4c4;"></div>
<div class="r" style="left:1219.5px;top:167px;width:1px;height:25px;background:#c4c4c4;"></div>
<div class="r" style="left:1579px;top:167px;width:1px;height:25px;background:#c4c4c4;"></div>
<svg class="r" style="left:113px;top:170px;" width="24" height="20" viewBox="0 0 24 20" preserveAspectRatio="none"><g fill="none" stroke="#444" stroke-width="1.3"><rect x="1.500" y="2" width="8" height="6"/><rect x="13" y="2" width="8" height="6"/><rect x="1.500" y="11.500" width="8" height="6"/><rect x="13" y="11.500" width="8" height="6"/></g></svg>
<svg class="r" style="left:141.8px;top:168px;" width="28" height="22.3" viewBox="0 0 28 22.3" preserveAspectRatio="none"><path d="M2.500,17.500V2.500H10.800V9.400H19.500V17.500Z" fill="#fff" stroke="#2a7fd4" stroke-width="1.2" stroke-linejoin="round" transform="scale(1.27273 1.115)"/><path d="M4.500,6V4.500H7" fill="none" stroke="#2a7fd4" stroke-width="0.9" transform="scale(1.27273 1.115)"/></svg>
<span class="t" style="left:169.0px;top:171.0px;font-size:13.5px;line-height:18px;color:#1a1a1a;letter-spacing:-0.036px;">(!) 1. First Floor [1. First Floor]</span>
<svg class="r" style="left:505px;top:170px;" width="22" height="20" viewBox="0 0 22 20" preserveAspectRatio="none"><path d="M2.500,8.500L11,3L19.500,8.500V17.500H2.500Z M2.500,8.500H19.500" fill="none" stroke="#333" stroke-width="1.3"/></svg>
<span class="t" style="left:530.0px;top:171.0px;font-size:13.5px;line-height:18px;color:#1a1a1a;letter-spacing:0.080px;">[D2 Building Section]</span>
<svg class="r" style="left:838px;top:174px;" width="14" height="12" viewBox="0 0 14 12" preserveAspectRatio="none"><path d="M3.500,2.500L10,9.500M10,2.500L3.500,9.500" stroke="#222" stroke-width="1.7"/></svg>
<svg class="r" style="left:865px;top:169px;" width="22" height="24" viewBox="0 0 22 24" preserveAspectRatio="none"><path d="M2.500,5L13,2.500V21.500L2.500,18Z" fill="#fff" stroke="#2a7fd4" stroke-width="1.4" stroke-linejoin="round"/><path d="M13,2.500H16.500Q19.500,12 16.500,21.500H13" fill="none" stroke="#2a7fd4" stroke-width="1.4"/></svg>
<span class="t" style="left:889.0px;top:171.0px;font-size:13.5px;line-height:18px;color:#1a1a1a;letter-spacing:0.055px;">(!) Vista Interior 1 [3D / All]</span>
<svg class="r" style="left:1225px;top:170px;" width="24" height="22" viewBox="0 0 24 22" preserveAspectRatio="none"><path d="M2.500,19V5.500Q2.500,2.500 5.500,2.500H15L21.500,9V19Z" fill="#fff" stroke="#2a7fd4" stroke-width="1.4" stroke-linejoin="round"/><path d="M6,15.500L7.500,11.500L14,5L16.500,7.500L10,14Z M12,16H18" fill="none" stroke="#2a7fd4" stroke-width="1.2"/></svg>
<span class="t" style="left:1249.0px;top:171.0px;font-size:13.5px;line-height:18px;color:#1a1a1a;letter-spacing:-0.132px;">(!) Welcome [0 Welcome]</span>
<svg class="r" style="left:1648px;top:169px;" width="42" height="22" viewBox="0 0 42 22" preserveAspectRatio="none"><g fill="none" stroke="#2a7fd4" stroke-width="1.4" stroke-linejoin="round"><path d="M4.500,7V17.400H10.500 M4.500,11.200H10.500 M4.500,14.300H10.500"/><rect x="3.300" y="4.800" width="3" height="3" fill="#2a7fd4" stroke="none"/><path d="M12.900,18.500V9.400L20.400,2.900L24,8.900V18.500Z" fill="#e8f2fc"/><path d="M20.400,2.900L33.800,10.400V18.500H24" fill="#e8f2fc"/><path d="M20.400,2.900L33.800,10.400L24,8.900Z" fill="#2a7fd4"/></g></svg>
<svg class="r" style="left:1690px;top:178px;" width="9" height="5" viewBox="0 0 9 5" preserveAspectRatio="none"><path d="M0,0H9L4.5,5Z" fill="#222"/></svg>
<div class="r" style="left:34px;top:171.5px;width:40px;height:1px;background:#9a9a9a;"></div>
<div class="r" style="left:0px;top:178px;width:52.5px;height:32px;background:#bcdaf6;"></div>
<svg class="r" style="left:13.5px;top:180px;" width="28" height="28" viewBox="-14 -14 28 28" preserveAspectRatio="none"><path d="M-5.500,-10.500V7.500L-1.500,3.500L2,10.500L4.500,9.300L1.200,2.500L6.500,2Z" fill="#8b919a" stroke="#3d434c" stroke-width="1.3" stroke-linejoin="round"/></svg>
<svg class="r" style="left:65.5px;top:180.7px;" width="28" height="28" viewBox="-14 -14 28 28" preserveAspectRatio="none"><rect x="-10.500" y="-8" width="21" height="16" fill="none" stroke="#333" stroke-width="1.700" stroke-dasharray="4.200 2"/></svg>
<div class="r" style="left:0px;top:218px;width:108px;height:23px;background:#dbdbdb;"></div>
<svg class="r" style="left:7px;top:227.5px;" width="9" height="5" viewBox="0 0 9 5" preserveAspectRatio="none"><path d="M0,0H9L4.5,5Z" fill="#333"/></svg>
<span class="t" style="left:26.0px;top:221.0px;font-size:13.5px;line-height:18px;color:#1a1a1a;letter-spacing:0.163px;">Design</span>
<div class="r" style="left:0px;top:573px;width:108px;height:23px;background:#dbdbdb;"></div>
<svg class="r" style="left:7px;top:582.5px;" width="9" height="5" viewBox="0 0 9 5" preserveAspectRatio="none"><path d="M0,0H9L4.5,5Z" fill="#333"/></svg>
<span class="t" style="left:26.0px;top:576.0px;font-size:13.5px;line-height:18px;color:#1a1a1a;letter-spacing:0.434px;">Document</span>
<div class="r" style="left:0px;top:893px;width:108px;height:23px;background:#dbdbdb;"></div>
<svg class="r" style="left:7px;top:902.5px;" width="9" height="5" viewBox="0 0 9 5" preserveAspectRatio="none"><path d="M0,0H9L4.5,5Z" fill="#333"/></svg>
<span class="t" style="left:26.0px;top:896.0px;font-size:13.5px;line-height:18px;color:#1a1a1a;letter-spacing:0.310px;">More</span>
<svg class="r" style="left:6.5px;top:241px;" width="40" height="40" viewBox="-20 -20 40 40" preserveAspectRatio="none"><g fill="none" stroke="#333" stroke-width="1.300" stroke-linejoin="round" stroke-linecap="round"><path d="M-10,-7L11.5,-9.7V2.5L-10,10.4Z" fill="#fafafa"/></g></svg>
<svg class="r" style="left:59px;top:241px;" width="40" height="40" viewBox="-20 -20 40 40" preserveAspectRatio="none"><g fill="none" stroke="#333" stroke-width="1.300" stroke-linejoin="round" stroke-linecap="round"><path d="M-5.8,-8.8L6.7,-10.9V9.5L-5.800,13Z" fill="#fafafa"/><path d="M-2,-0.500L-0.500,-1.500" stroke-width="1.600"/></g></svg>
<svg class="r" style="left:6.5px;top:277px;" width="40" height="40" viewBox="-20 -20 40 40" preserveAspectRatio="none"><g fill="none" stroke="#333" stroke-width="1.300" stroke-linejoin="round" stroke-linecap="round"><path d="M-9.500,-6.800L9.200,-8.600V5.400L-9.500,9.200Z" fill="#fafafa"/><path d="M-9.500,1.200L9.200,-1.600 M-0.200,-7.700V7.300"/></g></svg>
<svg class="r" style="left:59px;top:277px;" width="40" height="40" viewBox="-20 -20 40 40" preserveAspectRatio="none"><g fill="none" stroke="#333" stroke-width="1.300" stroke-linejoin="round" stroke-linecap="round"><path d="M-9.300,-6.800L9,-8.600V4.800L-9.300,9.200Z" fill="#fafafa"/><path d="M-7.300,-7V5.800L3,3.300L9,4.800 M3,-8V3.300 M-9.300,9.200L-7.300,5.800" stroke-width="1.200"/></g></svg>
<svg class="r" style="left:6.5px;top:313px;" width="40" height="40" viewBox="-20 -20 40 40" preserveAspectRatio="none"><g fill="none" stroke="#333" stroke-width="1.300" stroke-linejoin="round" stroke-linecap="round"><path d="M-4.600,-9V11A4.600,2.500 0 0 0 4.600,11V-9A4.600,2.200 0 0 0 -4.600,-9A4.600,2.200 0 0 0 4.600,-9" fill="#fafafa"/></g></svg>
<svg class="r" style="left:59px;top:313px;" width="40" height="40" viewBox="-20 -20 40 40" preserveAspectRatio="none"><g fill="none" stroke="#333" stroke-width="1.300" stroke-linejoin="round" stroke-linecap="round"><path d="M-12.800,-7.600L12.500,2V8L-12.800,-2.400Z" fill="#fafafa"/><path d="M-12.800,-7.600L-11,-8.600L12.500,0.300" stroke-width="1.100"/></g></svg>
<svg class="r" style="left:6.5px;top:349px;" width="40" height="40" viewBox="-20 -20 40 40" preserveAspectRatio="none"><g fill="none" stroke="#333" stroke-width="1.300" stroke-linejoin="round" stroke-linecap="round"><path d="M-16,1L-9,-3.500L-6.500,-1.500L2,-8.500L15.300,-1.800L-4,7.300Z" fill="#fafafa"/></g></svg>
<svg class="r" style="left:59px;top:349px;" width="40" height="40" viewBox="-20 -20 40 40" preserveAspectRatio="none"><g fill="none" stroke="#333" stroke-width="1.300" stroke-linejoin="round" stroke-linecap="round"><path d="M-13,-7.500L-4,-9.500L1,-7.500L-8,-5.500Z M-8,-5.500V-2.500L1,-4.500L6,-2.500L-3,-0.500Z M-3,-0.500V2.500L6,0.500L11,2.500L2,4.500Z M2,4.500V7.500L11,5.500L15.500,7.500L6,10Z" stroke-width="1.100" fill="#fafafa"/></g></svg>
<svg class="r" style="left:6.5px;top:385px;" width="40" height="40" viewBox="-20 -20 40 40" preserveAspectRatio="none"><g fill="none" stroke="#333" stroke-width="1.300" stroke-linejoin="round" stroke-linecap="round"><path d="M-12,10V0.500L12,-7V3 M-12,5L12,-2.500 M-3,-2.300V7.500 M4,-4.500V5"/></g></svg>
<svg class="r" style="left:59px;top:385px;" width="40" height="40" viewBox="-20 -20 40 40" preserveAspectRatio="none"><g fill="none" stroke="#333" stroke-width="1.300" stroke-linejoin="round" stroke-linecap="round"><path d="M-16.300,0.500L-9.300,-10H9L16.500,2.200L7.500,0L-2.400,9.200Z" fill="#fafafa"/><path d="M9,-10L-2.400,9.200" /></g></svg>
<svg class="r" style="left:6.5px;top:421px;" width="40" height="40" viewBox="-20 -20 40 40" preserveAspectRatio="none"><g fill="none" stroke="#333" stroke-width="1.300" stroke-linejoin="round" stroke-linecap="round"><path d="M-15.600,-4.300Q0,4 15.700,-11.600L12,8L3.300,3L-5.500,11.700Z" fill="#fafafa"/><path d="M3.300,3L15.700,-11.600"/></g></svg>
<svg class="r" style="left:59px;top:421px;" width="40" height="40" viewBox="-20 -20 40 40" preserveAspectRatio="none"><g fill="none" stroke="#333" stroke-width="1.300" stroke-linejoin="round" stroke-linecap="round"><path d="M-9,-0.500L2,8L14,5V1" fill="#fafafa" stroke-width="1.200"/><path d="M-13,-7L0,-8.700L14,0.800L1,2.800Z" fill="#fafafa" stroke-width="1.200"/><path d="M-14,-1L-6,-2" stroke-width="0.800"/></g></svg>
<svg class="r" style="left:6.5px;top:457px;" width="40" height="40" viewBox="-20 -20 40 40" preserveAspectRatio="none"><g fill="none" stroke="#333" stroke-width="1.300" stroke-linejoin="round" stroke-linecap="round"><path d="M-12,-9.800L12.700,-11.200V7L-12,11.600Z" fill="#fafafa"/><path d="M-12,-2.700L12.700,-5.100 M-12,4.400L12.700,1 M-3.800,-10.300V10 M4.500,-10.700V8.500"/></g></svg>
<svg class="r" style="left:59px;top:457px;" width="40" height="40" viewBox="-20 -20 40 40" preserveAspectRatio="none"><g fill="none" stroke="#333" stroke-width="1.300" stroke-linejoin="round" stroke-linecap="round"><path d="M-2,-11C-9,-7 -11,2 -9,8L0,12C4,6 8,4 11,2C6,-2 4,-7 3,-12Z" fill="#fafafa"/><path d="M3,-12C-1,-4 -1,4 0,12"/></g></svg>
<svg class="r" style="left:6.5px;top:493px;" width="40" height="40" viewBox="-20 -20 40 40" preserveAspectRatio="none"><g fill="none" stroke="#333" stroke-width="1.300" stroke-linejoin="round" stroke-linecap="round"><path d="M-8,10.200V-9.400Q-8,-11.500 -5,-11.800L0.400,-11.600V0"/><path d="M-8,2.200L0.400,0L10.500,2.200L1.100,5.800Z" fill="#fafafa"/><path d="M1.100,5.800V13 M10.500,2.200V10"/></g></svg>
<svg class="r" style="left:6.5px;top:529px;" width="40" height="40" viewBox="-20 -20 40 40" preserveAspectRatio="none"><g fill="none" stroke="#333" stroke-width="1.300" stroke-linejoin="round" stroke-linecap="round"><path d="M-19,-6Q-5,-10 5.500,-8.400Q12,-3 16.400,4L4.800,9.800Q-2,1 -19,-6Z" fill="#fafafa" stroke-width="1.200"/><path d="M-11,-7.800Q2,-2 8.600,7.900 M-3,-8.700Q6,-3 12.500,6 M-9,-2.800Q-1,-5 9.500,-4.500 M-0.500,3Q6,0 13.200,-0.500" stroke-width="1.100"/></g></svg>
<svg class="r" style="left:63px;top:497px;" width="32" height="32" viewBox="-16 -16 32 32" preserveAspectRatio="none"><g fill="none" stroke="#b5b5b5" stroke-width="1.300" stroke-linejoin="round" stroke-linecap="round"><path d="M-10,10V0H-6V-9H0V-4H6V-9H10V10H6V6H-6V10Z M-5,1H5 M-5,3.500H2" stroke-width="1.100"/></g></svg>
<svg class="r" style="left:10.5px;top:601px;" width="32" height="32" viewBox="-16 -16 32 32" preserveAspectRatio="none"><g fill="none" stroke="#333" stroke-width="1.300" stroke-linejoin="round" stroke-linecap="round"><path d="M-12,4H12 M-9,0V8 M9,0V8 M-1,1V7" stroke-width="1.200"/></g><text x="-5.500" y="-3" font-size="8" font-weight="bold" fill="#222">1.2</text></svg>
<svg class="r" style="left:63px;top:601px;" width="32" height="32" viewBox="-16 -16 32 32" preserveAspectRatio="none"><g fill="none" stroke="#b5b5b5" stroke-width="1.300" stroke-linejoin="round" stroke-linecap="round"><circle cx="0" cy="2" r="6.500"/><path d="M-11,2H11 M0,-9V13" stroke-width="1"/></g><text x="6" y="-6" font-size="7.500" fill="#b5b5b5">1.2</text></svg>
<svg class="r" style="left:10.5px;top:637px;" width="32" height="32" viewBox="-16 -16 32 32" preserveAspectRatio="none"><text x="-9.500" y="10.500" font-size="29" fill="#333" style="font-weight:normal">A</text></svg>
<svg class="r" style="left:61px;top:635px;" width="36" height="36" viewBox="-18 -18 36 36" preserveAspectRatio="none"><text x="-4" y="6" font-size="17" fill="#222">A1</text><path d="M-4,-4L-15,7 M-15,7V0 M-15,7H-8" fill="none" stroke="#222" stroke-width="1.700"/></svg>
<svg class="r" style="left:10.5px;top:673px;" width="32" height="32" viewBox="-16 -16 32 32" preserveAspectRatio="none"><path d="M-12,8L-4,-7H10L4,1L13,8Z" fill="#8a8a8a" stroke="#333" stroke-width="1.200"/><path d="M-9,8L-1,-7 M-5,8L4,-7 M-1,8L6,-3 M3,8L6,3 M7,8L9,5" stroke="#222" stroke-width="0.900"/></svg>
<svg class="r" style="left:63px;top:673px;" width="32" height="32" viewBox="-16 -16 32 32" preserveAspectRatio="none"><g fill="none" stroke="#333" stroke-width="1.300" stroke-linejoin="round" stroke-linecap="round"><path d="M-11,10L11,-10" stroke-width="1.400"/></g></svg>
<svg class="r" style="left:10.5px;top:709px;" width="32" height="32" viewBox="-16 -16 32 32" preserveAspectRatio="none"><g fill="none" stroke="#333" stroke-width="1.300" stroke-linejoin="round" stroke-linecap="round"><circle cx="0" cy="0" r="10.500" stroke-width="1.400"/></g></svg>
<svg class="r" style="left:63px;top:709px;" width="32" height="32" viewBox="-16 -16 32 32" preserveAspectRatio="none"><g fill="none" stroke="#333" stroke-width="1.300" stroke-linejoin="round" stroke-linecap="round"><path d="M-12,9V0C-10,-6 -4,-9 10,-9 M-12,9H13" stroke-width="1.400"/></g></svg>
<svg class="r" style="left:9.5px;top:744px;" width="34" height="34" viewBox="-17 -17 34 34" preserveAspectRatio="none"><g fill="none" stroke="#333" stroke-width="1.300" stroke-linejoin="round" stroke-linecap="round"><rect x="-14" y="-10" width="28" height="20" rx="2" stroke-width="1.400"/><path d="M-9,6V-6H-2V-2H3L8,-6 M-9,6H9V-3" stroke-width="1.400"/></g></svg>
<svg class="r" style="left:63px;top:745px;" width="32" height="32" viewBox="-16 -16 32 32" preserveAspectRatio="none"><g fill="none" stroke="#333" stroke-width="1.300" stroke-linejoin="round" stroke-linecap="round"><path d="M-13,-3H0V5H13" stroke-width="1.200"/></g><path d="M-11,-5l3.500,-5l3.500,5z M5,3l3.500,-5l3.500,5z" fill="#222"/></svg>
<svg class="r" style="left:10.5px;top:781px;" width="32" height="32" viewBox="-16 -16 32 32" preserveAspectRatio="none"><g fill="none" stroke="#333" stroke-width="1.300" stroke-linejoin="round" stroke-linecap="round"><path d="M-14,8H14" stroke-width="1.200"/></g><path d="M-4.500,3L0,-4L4.500,3Z" fill="#222"/></svg>
<svg class="r" style="left:63px;top:781px;" width="32" height="32" viewBox="-16 -16 32 32" preserveAspectRatio="none"><g fill="none" stroke="#b5b5b5" stroke-width="1.300" stroke-linejoin="round" stroke-linecap="round"><circle cx="0" cy="0" r="3.500"/></g><path d="M-2.500,-8L0,-11.500L2.500,-8Z M-2.500,8L0,11.500L2.500,8Z M-8,-2.500L-11.500,0L-8,2.500Z M8,-2.500L11.500,0L8,2.500Z" fill="#b5b5b5"/></svg>
<svg class="r" style="left:9.5px;top:816px;" width="34" height="34" viewBox="-17 -17 34 34" preserveAspectRatio="none"><g fill="none" stroke="#333" stroke-width="1.300" stroke-linejoin="round" stroke-linecap="round"><path d="M-14,10V-10H7L14,-3V10Z" stroke-width="1.400"/><path d="M-8,5L-6.500,0L2,-7L4.500,-4.500L-3.500,3.500Z M-2,6H9" stroke-width="1.200"/></g></svg>
<svg class="r" style="left:63px;top:817px;" width="32" height="32" viewBox="-16 -16 32 32" preserveAspectRatio="none"><g fill="none" stroke="#333" stroke-width="1.300" stroke-linejoin="round" stroke-linecap="round"><circle cx="0" cy="0" r="10" stroke-width="1.500"/><path d="M-4,-9V9 M-4,-3H9.500 M-4,3H4V9.500 M4,3L9,1" stroke-width="1.500"/></g></svg>
<svg class="r" style="left:10.5px;top:853px;" width="32" height="32" viewBox="-16 -16 32 32" preserveAspectRatio="none"><g fill="none" stroke="#333" stroke-width="1.300" stroke-linejoin="round" stroke-linecap="round"><path d="M-7,9A5,5 0 0 1 -9,0A5,5 0 0 1 -4,-7A6,6 0 0 1 6,-7A5,5 0 0 1 10,1A5,5 0 0 1 6,9Z" stroke-width="1.400"/><path d="M-6,5V-3H5V-1H-2V5Z" fill="#888" stroke-width="1"/><path d="M-6,5L5,-3" stroke-width="0.800"/></g></svg>
<svg class="r" style="left:10px;top:923px;" width="28" height="28" viewBox="-14 -14 28 28" preserveAspectRatio="none"><g fill="none" stroke="#333" stroke-width="1.300" stroke-linejoin="round" stroke-linecap="round"><circle cx="0" cy="-4" r="5.500"/><path d="M0,1.500V4 M0,7V9 M0,-6.500V-2 M-1.500,-5.500L0,-6.500" stroke-width="1.200"/></g></svg>
<svg class="r" style="left:58px;top:922px;" width="28" height="28" viewBox="-14 -14 28 28" preserveAspectRatio="none"><g fill="none" stroke="#444" stroke-width="1.300" stroke-linejoin="round" stroke-linecap="round"><path d="M-10,-7L10,-10V7L-10,10Z M-1,-8.500V8.500" stroke-width="1.200"/></g></svg>
<svg class="r" style="left:9px;top:956px;" width="30" height="30" viewBox="-15 -15 30 30" preserveAspectRatio="none"><g fill="none" stroke="#333" stroke-width="1.300" stroke-linejoin="round" stroke-linecap="round"><path d="M-12,-7C-5,-4 5,-4 12,-8V6C5,10 -5,10 -12,7Z M-12,0C-5,3 5,3 12,-1 M-4,-5V9 M4,-5V9" stroke-width="1.300"/></g></svg>
<svg class="r" style="left:56.5px;top:957px;" width="30" height="30" viewBox="-15 -15 30 30" preserveAspectRatio="none"><g fill="none" stroke="#333" stroke-width="1.300" stroke-linejoin="round" stroke-linecap="round"><path d="M-3,5C-6,3 -6.500,0 -5.500,-2A6,6 0 0 1 5.500,-2C6.500,0 6,3 3,5Z M-2.500,7.500H2.500 M-1.500,10H1.500" stroke-width="1.200"/><path d="M-2,0l1.500,-1.500l1,2l1,-2l1.500,1.500" stroke-width="0.900"/><path d="M0,-13V-10 M-9.500,-9L-7.500,-7 M9.500,-9L7.500,-7 M-12,0H-9 M12,0H9 M-9,8L-7,6 M9,8L7,6" stroke-width="1.200"/></g></svg>
<svg class="r" style="left:21px;top:994px;" width="20" height="20" viewBox="-10 -10 20 20" preserveAspectRatio="none"><g fill="none" stroke="#333" stroke-width="1.300" stroke-linejoin="round" stroke-linecap="round"><path d="M-7,3H7 M-5,1V5 M5,1V5" stroke-width="1"/></g><text x="-5" y="0" font-size="7.500" font-weight="bold" fill="#222">1.2</text></svg>
<svg class="r" style="left:65px;top:993.5px;" width="20" height="20" viewBox="-10 -10 20 20" preserveAspectRatio="none"><g fill="none" stroke="#333" stroke-width="1.300" stroke-linejoin="round" stroke-linecap="round"><path d="M-7,4L-2,-2 M0,3C2,-2 4,4 7,-1" stroke-width="1.200"/></g></svg>
<div class="r" style="left:98px;top:939px;width:8px;height:19px;background:#cdcdcd;"></div>
<svg class="r" style="left:99px;top:923px;" width="10" height="10" viewBox="0 0 10 10" preserveAspectRatio="none"><path d="M2,7L5,3.500L8,7" fill="none" stroke="#444" stroke-width="1.800"/></svg>
<svg class="r" style="left:98px;top:987px;" width="12" height="10" viewBox="0 0 12 10" preserveAspectRatio="none"><path d="M2,3L5.500,7L9,3" fill="none" stroke="#333" stroke-width="1.800"/></svg>
<div class="r" style="left:0px;top:1004px;width:108px;height:28px;background:#f0f0f0;"></div>
<div class="r" style="left:0px;top:1004px;width:1703px;height:1px;background:#fafafa;"></div>
<div class="r" style="left:1771px;top:171.5px;width:81px;height:1px;background:#a8a8a8;"></div>
<div class="r" style="left:1706px;top:182px;width:50px;height:32px;background:#e1e1e1;border:1px solid #adadad;box-sizing:border-box;"></div>
<svg class="r" style="left:1714px;top:186px;" width="26" height="24" viewBox="0 0 26 24" preserveAspectRatio="none"><g fill="none" stroke="#333" stroke-width="1.3"><path d="M5,13.500V7L9.500,3.500L14.500,7V12H5"/><path d="M9.500,3.500V8"/><path d="M7.500,13.500V22H12.500 M7.500,17.500H12.500" /><path d="M15,17.500H20M15,22H20" stroke-width="1.8"/></g></svg>
<svg class="r" style="left:1746px;top:194px;" width="5" height="8" viewBox="0 0 5 8" preserveAspectRatio="none"><path d="M0,0L4,4L0,8Z" fill="#222"/></svg>
<div class="r" style="left:1812px;top:180px;width:35px;height:34px;background:#bfdcf6;"></div>
<svg class="r" style="left:1780px;top:184px;" width="140" height="28" viewBox="0 0 140 28" preserveAspectRatio="none"><g fill="none" stroke="#333" stroke-width="1.4"><path d="M5.500,22V12.500L13,5.500L17.500,11V22Z M13,5.500L23,10.500V22H17.500"/><path d="M39,23V6.500H49.500V13.500H61V23Z" stroke="#222" stroke-width="1.600"/><path d="M42,10.500V9H45" stroke="#444" stroke-width="1"/><path d="M77,24V12L82,6H96V21H91 M77,24H91V21 M82,6V18.500L77,24"/><rect x="91" y="21" width="5" height="3.500" fill="#333"/><path d="M115,8V5.500H129V19.500H126.500 M117.500,10.500V8H131.500V22H129"/><rect x="112.500" y="10.500" width="14" height="14" rx="1"/></g></svg>
<div class="r" style="left:1704px;top:218px;width:196px;height:560px;background:#fff;"></div>
<div class="r" style="left:1900px;top:218px;width:20px;height:560px;background:#f7f7f7;"></div>
<div class="r" style="left:1901px;top:262.5px;width:19px;height:494.5px;background:#cdcdcd;"></div>
<svg class="r" style="left:1900px;top:220px;" width="20" height="20" viewBox="0 0 20 20" preserveAspectRatio="none"><path d="M5.500,13L10,8.500L14.500,13" fill="none" stroke="#444" stroke-width="1.8"/></svg>
<svg class="r" style="left:1900px;top:759px;" width="20" height="20" viewBox="0 0 20 20" preserveAspectRatio="none"><path d="M5.500,7.500L10,12L14.500,7.500" fill="none" stroke="#444" stroke-width="1.8"/></svg>
<div class="r" style="left:1704px;top:403.5px;width:196px;height:26px;background:#d9d9d9;"></div>
<svg class="r" style="left:1739px;top:221px;" width="24" height="22" viewBox="0 0 24 22" preserveAspectRatio="none"><path d="M2.500,19V5.500Q2.500,2.500 5.500,2.500H15L21.500,9V19Z" fill="#fff" stroke="#2a7fd4" stroke-width="1.4" stroke-linejoin="round"/><path d="M6,15.500L7.500,11.500L14,5L16.500,7.500L10,14Z M12,16H18" fill="none" stroke="#2a7fd4" stroke-width="1.2"/></svg>
<span class="t" style="left:1769.0px;top:223.0px;font-size:13.5px;line-height:18px;color:#1a1a1a;letter-spacing:0.426px;">Welcome</span>
<svg class="r" style="left:1740px;top:246.42px;" width="22" height="24" viewBox="0 0 22 24" preserveAspectRatio="none"><path d="M2.500,5L13,2.500V21.500L2.500,18Z" fill="#fff" stroke="#2a7fd4" stroke-width="1.4" stroke-linejoin="round"/><path d="M13,2.500H16.500Q19.500,12 16.500,21.500H13" fill="none" stroke="#2a7fd4" stroke-width="1.4"/></svg>
<span class="t" style="left:1769.0px;top:249.4px;font-size:13.5px;line-height:18px;color:#1a1a1a;letter-spacing:-0.088px;">General 3D View - Perspective</span>
<svg class="r" style="left:1740px;top:272.84px;" width="22" height="24" viewBox="0 0 22 24" preserveAspectRatio="none"><path d="M2.500,8L8,2.500H19.500V15L14,21.500H2.500Z M2.500,8H14V21.500 M14,8L19.500,2.500" fill="#fff" stroke="#2a7fd4" stroke-width="1.4" stroke-linejoin="round"/></svg>
<span class="t" style="left:1769.0px;top:275.8px;font-size:13.5px;line-height:18px;color:#1a1a1a;letter-spacing:-0.085px;">General 3D View - Axonometry</span>
<svg class="r" style="left:1740px;top:299.26px;" width="22" height="24" viewBox="0 0 22 24" preserveAspectRatio="none"><path d="M2.500,5L13,2.500V21.500L2.500,18Z" fill="#fff" stroke="#2a7fd4" stroke-width="1.4" stroke-linejoin="round"/><path d="M13,2.500H16.500Q19.500,12 16.500,21.500H13" fill="none" stroke="#2a7fd4" stroke-width="1.4"/></svg>
<span class="t" style="left:1769.0px;top:302.3px;font-size:13.5px;line-height:18px;color:#1a1a1a;letter-spacing:0.353px;">3D View with Neighbours</span>
<svg class="r" style="left:1724px;top:330.18px;" width="12" height="14" viewBox="0 0 12 14" preserveAspectRatio="none"><path d="M3.500,2.500L8.500,7L3.500,11.500" fill="none" stroke="#9a9a9a" stroke-width="1.8"/></svg>
<svg class="r" style="left:1739.3px;top:325.98px;" width="25.4" height="22" viewBox="0 0 24 20" preserveAspectRatio="none"><path d="M2.500,17.500V3.500Q2.500,2.500 3.500,2.500H9L10.500,5.500H20.500Q21.500,5.500 21.500,6.500V17.500Z M2.500,5.500H10.500" fill="#efefef" stroke="#3a3a3a" stroke-width="1.350" stroke-linejoin="round"/></svg>
<span class="t" style="left:1769.0px;top:328.7px;font-size:13.5px;line-height:18px;color:#1a1a1a;letter-spacing:-0.297px;">00_Site Plan</span>
<svg class="r" style="left:1723px;top:357.6px;" width="14" height="12" viewBox="0 0 14 12" preserveAspectRatio="none"><path d="M2.500,3.500L7,8.500L11.500,3.500" fill="none" stroke="#333" stroke-width="2"/></svg>
<svg class="r" style="left:1739.3px;top:352.4px;" width="25.4" height="22" viewBox="0 0 24 20" preserveAspectRatio="none"><path d="M2.500,17.500V3.500Q2.500,2.500 3.500,2.500H9L10.500,5.500H20.500Q21.500,5.500 21.500,6.500V17.500Z M2.500,5.500H10.500" fill="#efefef" stroke="#3a3a3a" stroke-width="1.350" stroke-linejoin="round"/></svg>
<span class="t" style="left:1769.0px;top:355.1px;font-size:13.5px;line-height:18px;color:#1a1a1a;letter-spacing:-0.081px;">01_Floor Plan</span>
<svg class="r" style="left:1750px;top:378.37px;" width="27.8" height="21.7" viewBox="0 0 27.8 21.7" preserveAspectRatio="none"><path d="M2.500,17.500V2.500H10.800V9.400H19.500V17.500Z" fill="#fff" stroke="#2a7fd4" stroke-width="1.15" stroke-linejoin="round" transform="scale(1.26364 1.085)"/><path d="M4.500,6V4.500H7" fill="none" stroke="#2a7fd4" stroke-width="0.9" transform="scale(1.26364 1.085)"/></svg>
<span class="t" style="left:1781.0px;top:381.5px;font-size:13.5px;line-height:18px;color:#1a1a1a;letter-spacing:0.068px;">2. Roof</span>
<svg class="r" style="left:1750px;top:404.79px;" width="27.8" height="21.7" viewBox="0 0 27.8 21.7" preserveAspectRatio="none"><path d="M2.500,17.500V2.500H10.800V9.400H19.500V17.500Z" fill="#fff" stroke="#2a7fd4" stroke-width="1.15" stroke-linejoin="round" transform="scale(1.26364 1.085)"/><path d="M4.500,6V4.500H7" fill="none" stroke="#2a7fd4" stroke-width="0.9" transform="scale(1.26364 1.085)"/></svg>
<span class="t" style="left:1781.0px;top:407.9px;font-size:13.5px;line-height:18px;color:#1a1a1a;letter-spacing:0.088px;">1. First Floor</span>
<svg class="r" style="left:1750px;top:431.21px;" width="27.8" height="21.7" viewBox="0 0 27.8 21.7" preserveAspectRatio="none"><path d="M2.500,17.500V2.500H10.800V9.400H19.500V17.500Z" fill="#fff" stroke="#2a7fd4" stroke-width="1.15" stroke-linejoin="round" transform="scale(1.26364 1.085)"/><path d="M4.500,6V4.500H7" fill="none" stroke="#2a7fd4" stroke-width="0.9" transform="scale(1.26364 1.085)"/></svg>
<span class="t" style="left:1781.0px;top:434.4px;font-size:13.5px;line-height:18px;color:#1a1a1a;letter-spacing:0.230px;">0. Ground Floor</span>
<svg class="r" style="left:1750px;top:457.63px;" width="27.8" height="21.7" viewBox="0 0 27.8 21.7" preserveAspectRatio="none"><path d="M2.500,17.500V2.500H10.800V9.400H19.500V17.500Z" fill="#fff" stroke="#2a7fd4" stroke-width="1.15" stroke-linejoin="round" transform="scale(1.26364 1.085)"/><path d="M4.500,6V4.500H7" fill="none" stroke="#2a7fd4" stroke-width="0.9" transform="scale(1.26364 1.085)"/></svg>
<span class="t" style="left:1781.0px;top:460.8px;font-size:13.5px;line-height:18px;color:#1a1a1a;letter-spacing:0.315px;">-1. Footing</span>
<svg class="r" style="left:1750px;top:484.05px;" width="27.8" height="21.7" viewBox="0 0 27.8 21.7" preserveAspectRatio="none"><path d="M2.500,17.500V2.500H10.800V9.400H19.500V17.500Z" fill="#fff" stroke="#2a7fd4" stroke-width="1.15" stroke-linejoin="round" transform="scale(1.26364 1.085)"/><path d="M4.500,6V4.500H7" fill="none" stroke="#2a7fd4" stroke-width="0.9" transform="scale(1.26364 1.085)"/></svg>
<span class="t" style="left:1781.0px;top:487.2px;font-size:13.5px;line-height:18px;color:#1a1a1a;letter-spacing:0.353px;">-2. Foundation</span>
<svg class="r" style="left:1724px;top:515.12px;" width="12" height="14" viewBox="0 0 12 14" preserveAspectRatio="none"><path d="M3.500,2.500L8.500,7L3.500,11.500" fill="none" stroke="#9a9a9a" stroke-width="1.8"/></svg>
<svg class="r" style="left:1739.3px;top:510.92px;" width="25.4" height="22" viewBox="0 0 24 20" preserveAspectRatio="none"><path d="M2.500,17.500V3.500Q2.500,2.500 3.500,2.500H9L10.500,5.500H20.500Q21.500,5.500 21.500,6.500V17.500Z M2.500,5.500H10.500" fill="#efefef" stroke="#3a3a3a" stroke-width="1.350" stroke-linejoin="round"/></svg>
<span class="t" style="left:1769.0px;top:513.6px;font-size:13.5px;line-height:18px;color:#1a1a1a;letter-spacing:-0.155px;">02_Section</span>
<svg class="r" style="left:1724px;top:541.54px;" width="12" height="14" viewBox="0 0 12 14" preserveAspectRatio="none"><path d="M3.500,2.500L8.500,7L3.500,11.500" fill="none" stroke="#9a9a9a" stroke-width="1.8"/></svg>
<svg class="r" style="left:1739px;top:537.54px;" width="26" height="24" viewBox="0 0 26 24" preserveAspectRatio="none"><path d="M4.500,11L14,3.500L23.500,8.500V19.500H4.500Z" fill="#cfe3f7" stroke="#2a7fd4" stroke-width="1.4" stroke-linejoin="round"/><path d="M4.500,11L14,8.500L23.500,8.500" fill="none" stroke="#2a7fd4" stroke-width="1.2"/><path d="M2,15h5v3l2,1.500l-2,1.500v2h-5z" fill="#222"/></svg>
<span class="t" style="left:1769.0px;top:540.0px;font-size:13.5px;line-height:18px;color:#1a1a1a;letter-spacing:-0.139px;">03_Elevations</span>
<svg class="r" style="left:1724px;top:567.96px;" width="12" height="14" viewBox="0 0 12 14" preserveAspectRatio="none"><path d="M3.500,2.500L8.500,7L3.500,11.500" fill="none" stroke="#9a9a9a" stroke-width="1.8"/></svg>
<svg class="r" style="left:1739.3px;top:563.76px;" width="25.4" height="22" viewBox="0 0 24 20" preserveAspectRatio="none"><path d="M2.500,17.500V3.500Q2.500,2.500 3.500,2.500H9L10.500,5.500H20.500Q21.500,5.500 21.500,6.500V17.500Z M2.500,5.500H10.500" fill="#efefef" stroke="#3a3a3a" stroke-width="1.350" stroke-linejoin="round"/></svg>
<span class="t" style="left:1769.0px;top:566.5px;font-size:13.5px;line-height:18px;color:#1a1a1a;letter-spacing:-0.214px;">04_Schedules</span>
<svg class="r" style="left:1724px;top:594.38px;" width="12" height="14" viewBox="0 0 12 14" preserveAspectRatio="none"><path d="M3.500,2.500L8.500,7L3.500,11.500" fill="none" stroke="#9a9a9a" stroke-width="1.8"/></svg>
<svg class="r" style="left:1739px;top:590.38px;" width="26" height="24" viewBox="0 0 26 24" preserveAspectRatio="none"><circle cx="13.500" cy="11.500" r="9.500" fill="#fff" stroke="#2a7fd4" stroke-width="1.400"/><path d="M10,2.700V20.300 M4.300,9H22.700 M10,14H17V20 M17,14L22,11" fill="none" stroke="#2a7fd4" stroke-width="1.400"/><path d="M2,15h5v3l2,1.500l-2,1.500v2h-5z" fill="#222"/></svg>
<span class="t" style="left:1769.0px;top:592.9px;font-size:13.5px;line-height:18px;color:#1a1a1a;letter-spacing:-0.079px;">06_Details</span>
<svg class="r" style="left:1724px;top:620.8px;" width="12" height="14" viewBox="0 0 12 14" preserveAspectRatio="none"><path d="M3.500,2.500L8.500,7L3.500,11.500" fill="none" stroke="#9a9a9a" stroke-width="1.8"/></svg>
<svg class="r" style="left:1739.3px;top:616.6px;" width="25.4" height="22" viewBox="0 0 24 20" preserveAspectRatio="none"><path d="M2.500,17.500V3.500Q2.500,2.500 3.500,2.500H9L10.500,5.500H20.500Q21.500,5.500 21.500,6.500V17.500Z M2.500,5.500H10.500" fill="#efefef" stroke="#3a3a3a" stroke-width="1.350" stroke-linejoin="round"/></svg>
<span class="t" style="left:1769.0px;top:619.3px;font-size:13.5px;line-height:18px;color:#1a1a1a;letter-spacing:-0.022px;">08_Presentation</span>
<svg class="r" style="left:1724px;top:647.22px;" width="12" height="14" viewBox="0 0 12 14" preserveAspectRatio="none"><path d="M3.500,2.500L8.500,7L3.500,11.500" fill="none" stroke="#9a9a9a" stroke-width="1.8"/></svg>
<svg class="r" style="left:1739.3px;top:643.02px;" width="25.4" height="22" viewBox="0 0 24 20" preserveAspectRatio="none"><path d="M2.500,17.500V3.500Q2.500,2.500 3.500,2.500H9L10.500,5.500H20.500Q21.500,5.500 21.500,6.500V17.500Z M2.500,5.500H10.500" fill="#efefef" stroke="#3a3a3a" stroke-width="1.350" stroke-linejoin="round"/></svg>
<span class="t" style="left:1769.0px;top:645.7px;font-size:13.5px;line-height:18px;color:#1a1a1a;letter-spacing:-0.067px;">09_Quality Assurance</span>
<svg class="r" style="left:1723px;top:674.64px;" width="14" height="12" viewBox="0 0 14 12" preserveAspectRatio="none"><path d="M2.500,3.500L7,8.500L11.500,3.500" fill="none" stroke="#333" stroke-width="2"/></svg>
<svg class="r" style="left:1739.3px;top:669.44px;" width="25.4" height="22" viewBox="0 0 24 20" preserveAspectRatio="none"><path d="M2.500,17.500V3.500Q2.500,2.500 3.500,2.500H9L10.500,5.500H20.500Q21.500,5.500 21.500,6.500V17.500Z M2.500,5.500H10.500" fill="#efefef" stroke="#3a3a3a" stroke-width="1.350" stroke-linejoin="round"/></svg>
<span class="t" style="left:1769.0px;top:672.1px;font-size:13.5px;line-height:18px;color:#1a1a1a;letter-spacing:0.144px;">Vistas Interiores</span>
<svg class="r" style="left:1752px;top:695.56px;" width="22" height="24" viewBox="0 0 22 24" preserveAspectRatio="none"><path d="M2.500,5L13,2.500V21.500L2.500,18Z" fill="#fff" stroke="#2a7fd4" stroke-width="1.4" stroke-linejoin="round"/><path d="M13,2.500H16.500Q19.500,12 16.500,21.500H13" fill="none" stroke="#2a7fd4" stroke-width="1.4"/></svg>
<span class="t" style="left:1781.0px;top:698.6px;font-size:13.5px;line-height:18px;color:#1a1a1a;letter-spacing:0.138px;">Vista Interior 1</span>
<svg class="r" style="left:1723px;top:727.48px;" width="14" height="12" viewBox="0 0 14 12" preserveAspectRatio="none"><path d="M2.500,3.500L7,8.500L11.500,3.500" fill="none" stroke="#333" stroke-width="2"/></svg>
<svg class="r" style="left:1739.3px;top:722.28px;" width="25.4" height="22" viewBox="0 0 24 20" preserveAspectRatio="none"><path d="M2.500,17.500V3.500Q2.500,2.500 3.500,2.500H9L10.500,5.500H20.500Q21.500,5.500 21.500,6.500V17.500Z M2.500,5.500H10.500" fill="#efefef" stroke="#3a3a3a" stroke-width="1.350" stroke-linejoin="round"/></svg>
<span class="t" style="left:1769.0px;top:725.0px;font-size:13.5px;line-height:18px;color:#1a1a1a;letter-spacing:-0.061px;">Vistas Exteriores</span>
<svg class="r" style="left:1752px;top:748.4px;" width="22" height="24" viewBox="0 0 22 24" preserveAspectRatio="none"><path d="M2.500,5L13,2.500V21.500L2.500,18Z" fill="#fff" stroke="#2a7fd4" stroke-width="1.4" stroke-linejoin="round"/><path d="M13,2.500H16.500Q19.500,12 16.500,21.500H13" fill="none" stroke="#2a7fd4" stroke-width="1.4"/></svg>
<span class="t" style="left:1781.0px;top:751.4px;font-size:13.5px;line-height:18px;color:#1a1a1a;letter-spacing:-0.081px;">Vista Exterior 1</span>
<div class="r" style="left:1899px;top:218px;width:1px;height:560px;background:#fff;"></div>
<div class="r" style="left:1900px;top:218px;width:20px;height:560px;background:#f7f7f7;"></div>
<div class="r" style="left:1901px;top:262.5px;width:19px;height:494.5px;background:#cdcdcd;"></div>
<svg class="r" style="left:1900px;top:220px;" width="20" height="20" viewBox="0 0 20 20" preserveAspectRatio="none"><path d="M5.500,13L10,8.500L14.500,13" fill="none" stroke="#444" stroke-width="1.8"/></svg>
<svg class="r" style="left:1900px;top:759px;" width="20" height="20" viewBox="0 0 20 20" preserveAspectRatio="none"><path d="M5.500,7.500L10,12L14.500,7.500" fill="none" stroke="#444" stroke-width="1.8"/></svg>
<div class="r" style="left:1704px;top:778px;width:196px;height:22px;background:#f0f0f0;"></div>
<div class="r" style="left:1725px;top:781px;width:76px;height:17px;background:#cdcdcd;"></div>
<svg class="r" style="left:1707px;top:782px;" width="14" height="14" viewBox="0 0 14 14" preserveAspectRatio="none"><path d="M9,2.500L4.500,7L9,11.500" fill="none" stroke="#444" stroke-width="1.8"/></svg>
<svg class="r" style="left:1882px;top:782px;" width="14" height="14" viewBox="0 0 14 14" preserveAspectRatio="none"><path d="M5,2.500L9.500,7L5,11.500" fill="none" stroke="#444" stroke-width="1.8"/></svg>
<svg class="r" style="left:1743.5px;top:810.5px;" width="28" height="28" viewBox="-14 -14 28 28" preserveAspectRatio="none"><g fill="none" stroke="#2a7fd4" stroke-width="1.400"><path d="M-9,-9H-4L-3,-7H1 M-9,-9V1H-3 M-3,-4V9H9V-1H4L3,-4H-3Z"/><rect x="1" y="3" width="6.500" height="6" stroke-width="1.200"/><path d="M2.500,5H6 M2.500,7H6" stroke-width="0.900"/></g></svg>
<svg class="r" style="left:1779px;top:810.5px;" width="28" height="28" viewBox="-14 -14 28 28" preserveAspectRatio="none"><g fill="none" stroke-width="1.400"><path d="M-9,9V-3H-2L1,1" stroke="#2a7fd4"/><path d="M-9,9H9V2" stroke="#333"/><path d="M-6,9V3L-1,-1L3,3V9 M-2,9V5H1V9" stroke="#333" stroke-width="1.200"/><circle cx="5.500" cy="-4.500" r="5" stroke="#2a7fd4"/><path d="M5.500,-7V-2M3,-4.500H8" stroke="#2a7fd4"/></g></svg>
<svg class="r" style="left:1816px;top:810.5px;" width="28" height="28" viewBox="-14 -14 28 28" preserveAspectRatio="none"><g fill="none" stroke-width="1.400"><path d="M-10,9V-4H-5L-3.500,-1.500H1 M-10,9H8V3" stroke="#333"/><circle cx="5.500" cy="-4" r="5" stroke="#2a7fd4"/><path d="M5.500,-6.500V-1.500M3,-4H8" stroke="#2a7fd4"/></g></svg>
<svg class="r" style="left:1851.5px;top:810.5px;" width="28" height="28" viewBox="-14 -14 28 28" preserveAspectRatio="none"><path d="M-7,5V-8H-1V-3H10V5Z" fill="#fff" stroke="#2a7fd4" stroke-width="1.400" stroke-linejoin="round"/><path d="M-10,2h5v3l2,1.500l-2,1.500v2h-5z" fill="#222"/></svg>
<svg class="r" style="left:1887.5px;top:810.5px;" width="28" height="28" viewBox="-14 -14 28 28" preserveAspectRatio="none"><path d="M-7,-7L7,7M7,-7L-7,7" stroke="#f0642d" stroke-width="2.200" stroke-linecap="round"/></svg>
<div class="r" style="left:1704px;top:851px;width:216px;height:19px;background:#d9d9d9;"></div>
<svg class="r" style="left:1709.5px;top:858px;" width="9" height="5" viewBox="0 0 9 5" preserveAspectRatio="none"><path d="M0,0H9L4.5,5Z" fill="#333"/></svg>
<span class="t" style="left:1728.0px;top:851.5px;font-size:13.5px;line-height:18px;color:#1a1a1a;letter-spacing:0.047px;">Properties</span>
<svg class="r" style="left:1707px;top:880px;" width="17" height="15" viewBox="0 0 17 15" preserveAspectRatio="none"><path d="M2.500,17.500V2.500H10.800V9.400H19.500V17.500Z" fill="#fff" stroke="#2a7fd4" stroke-width="1.2" stroke-linejoin="round" transform="scale(0.772727 0.75)"/><path d="M4.500,6V4.500H7" fill="none" stroke="#2a7fd4" stroke-width="0.9" transform="scale(0.772727 0.75)"/></svg>
<div class="r" style="left:1731px;top:877px;width:39px;height:22px;background:#fff;border:1px solid #8a8a8a;box-sizing:border-box;"></div>
<span class="t" style="left:1737.0px;top:879.5px;font-size:13.5px;line-height:18px;color:#1a1a1a;letter-spacing:-0.629px;">1.</span>
<div class="r" style="left:1771.5px;top:877px;width:149px;height:22px;background:#fff;border:1px solid #8a8a8a;box-sizing:border-box;"></div>
<span class="t" style="left:1776.0px;top:879.5px;font-size:13.5px;line-height:18px;color:#1a1a1a;letter-spacing:0.204px;">First Floor</span>
<svg class="r" style="left:1706px;top:902px;" width="20" height="18" viewBox="0 0 20 18" preserveAspectRatio="none"><g fill="none" stroke="#333" stroke-width="1.2"><path d="M4.500,6.500L7,3.500H17.500L15,6.500Z"/><path d="M3,11L5.500,8H17L14.500,11Z"/><path d="M2,15.500L4.500,12.500H16.500L14,15.500Z"/></g></svg>
<span class="t" style="left:1730.0px;top:902.0px;font-size:13.5px;line-height:18px;color:#1a1a1a;letter-spacing:0.413px;">Floorplan</span>
<svg class="r" style="left:1706px;top:926px;" width="20" height="12" viewBox="0 0 20 12" preserveAspectRatio="none"><rect x="1.500" y="2.500" width="16" height="7" fill="none" stroke="#333" stroke-width="1.2"/><path d="M5.500,9V6.500M9.500,9V6.500M13.500,9V6.500" stroke="#333" stroke-width="1"/></svg>
<span class="t" style="left:1730.0px;top:923.5px;font-size:13.5px;line-height:18px;color:#1a1a1a;letter-spacing:-0.319px;">1:50</span>
<svg class="r" style="left:1706px;top:946px;" width="20" height="16" viewBox="0 0 20 16" preserveAspectRatio="none"><rect x="1.500" y="2" width="16" height="12" fill="none" stroke="#333" stroke-width="1.3"/><rect x="5" y="5.500" width="9" height="5" fill="none" stroke="#333" stroke-width="1.2"/></svg>
<span class="t" style="left:1730.0px;top:945.0px;font-size:13.5px;line-height:18px;color:#1a1a1a;letter-spacing:0.099px;">03 Building Plans</span>
<div class="r" style="left:1706px;top:969px;width:211px;height:24px;background:#e1e1e1;border:1px solid #adadad;box-sizing:border-box;"></div>
<span class="t" style="left:1781.0px;top:972.5px;font-size:13.5px;line-height:18px;color:#1a1a1a;letter-spacing:0.088px;">Settings...</span>
<svg class="r" style="left:1709px;top:1008px;" width="24" height="22" viewBox="0 0 24 22" preserveAspectRatio="none"><path d="M3.500,13.500V4H19V7.500" fill="none" stroke="#333" stroke-width="1.600"/><rect x="7" y="7.500" width="13.500" height="11" fill="none" stroke="#333" stroke-width="1.800"/></svg>
<div class="r" style="left:1703px;top:1004px;width:217px;height:1px;background:#fafafa;"></div>
<div class="r" style="left:1737px;top:1008px;width:1px;height:22px;background:#fafafa;"></div>
<div class="r" style="left:1890px;top:1008px;width:1px;height:22px;background:#fafafa;"></div>
<span class="t" style="left:1755.0px;top:1009.0px;font-size:15.5px;line-height:20px;color:#333;letter-spacing:-0.226px;">GRAPHISOFT</span>
<span class="t" style="left:1858.5px;top:1009.0px;font-size:15.5px;line-height:20px;color:#777;letter-spacing:-0.250px;">ID</span>
<div class="r" style="left:195px;top:983px;width:1px;height:20px;background:#bdbdbd;"></div>
<div class="r" style="left:346.5px;top:983px;width:1px;height:20px;background:#bdbdbd;"></div>
<div class="r" style="left:498px;top:983px;width:1px;height:20px;background:#bdbdbd;"></div>
<div class="r" style="left:649px;top:983px;width:1px;height:20px;background:#bdbdbd;"></div>
<div class="r" style="left:800px;top:983px;width:1px;height:20px;background:#bdbdbd;"></div>
<div class="r" style="left:951px;top:983px;width:1px;height:20px;background:#bdbdbd;"></div>
<div class="r" style="left:1101px;top:983px;width:1px;height:20px;background:#bdbdbd;"></div>
<div class="r" style="left:1252.5px;top:983px;width:1px;height:20px;background:#bdbdbd;"></div>
<div class="r" style="left:1403.5px;top:983px;width:1px;height:20px;background:#bdbdbd;"></div>
<div class="r" style="left:1554.5px;top:983px;width:1px;height:20px;background:#bdbdbd;"></div>
<svg class="r" style="left:100px;top:982px;" width="1603" height="24" viewBox="100 982 1603 24" preserveAspectRatio="none"><g fill="none" stroke="#333" stroke-width="1.3" stroke-linecap="round"><path d="M117,989.500H123V995" transform="rotate(-90 120 992) translate(0 -2)"/><path d="M116.500,992A6.500,6.500 0 1 1 119,998.500"/><path d="M127.500,998L131.500,1002"/></g>
<g fill="none" stroke="#bdbdbd" stroke-width="1.300" stroke-linecap="round"><path d="M156.500,992A6.500,6.500 0 1 0 154,998.500"/><path d="M152,987.500H157V992.500"/><path d="M154,998.500L158,1002.500"/></g>
<g fill="none" stroke="#333" stroke-width="1.3" stroke-linecap="round"><circle cx="177" cy="992" r="6.500"/><path d="M174,992H180M177,989V995M182,997L186,1001.500"/></g>
<g fill="none" stroke="#333" stroke-width="1.3" stroke-linecap="round"><circle cx="210.500" cy="992" r="6.500"/><path d="M215.500,997L219.500,1001.500"/></g><g fill="#333"><circle cx="208" cy="990" r="1.200"/><circle cx="213" cy="990" r="1.200"/><circle cx="208" cy="994.500" r="1.200"/><circle cx="213" cy="994.500" r="1.200"/></g>
<g fill="none" stroke="#ababab" stroke-width="1.200"><path d="M357,992L361.500,987.500H367L362,993.500Z M365,999V995.500L368,993 M363,996L365,994L367,996" /></g>
<g fill="none" stroke="#333" stroke-width="1.3" stroke-linecap="round"><rect x="506.500" y="989.500" width="15.500" height="6.500"/><path d="M510.500,996V993.500M514.500,996V993.500M518.500,996V993.500" stroke-width="1"/></g>
<g fill="none" stroke="#333" stroke-width="1.3" stroke-linecap="round"><path d="M659,989.500L662,986H673.500L670.500,989.500Z M658,993.500L661,990 M670,993.500L673,990 M658,993.500H670 M657,997.500L660,994 M669,997.500L672,994 M657,997.500H669" stroke-width="1.2"/></g>
<g fill="none" stroke="#333" stroke-width="1.3" stroke-linecap="round"><rect x="809.500" y="987.500" width="15" height="11" stroke-width="1.200"/><path d="M809.500,990H824.500" stroke-width="2"/><path d="M810,998L816,991 M814,998L820,991 M818,998L824,991" stroke-width="1.100"/></g>
<g fill="none" stroke="#333" stroke-width="1.3" stroke-linecap="round"><path d="M963.500,986V994.500L967,999L970.500,994.500V986 M967,999V1002" stroke-width="1.300"/></g>
<g fill="none" stroke="#333" stroke-width="1.3" stroke-linecap="round"><rect x="1111.500" y="987.500" width="15.500" height="11" stroke-width="1.300"/><rect x="1115" y="990.500" width="8.500" height="5" stroke-width="1.200"/></g>
<g fill="none" stroke="#333" stroke-width="1.3" stroke-linecap="round"><path d="M1264,988.500H1270V991.500 M1264,988.500V997.500H1268" stroke-width="1.300"/><rect x="1269.500" y="993" width="7.500" height="6.500" fill="#555"/><path d="M1271,993V991A2.200,2.200 0 0 1 1275.500,991V993" stroke-width="1.200"/></g>
<g fill="none" stroke="#333" stroke-width="1.3" stroke-linecap="round"><path d="M1414,999.500L1421,986L1429,999.500Z M1421,986V999.500" stroke-width="1.200"/><path d="M1419,999.500V995.500L1422.500,992.500L1426,995.500V999.500Z" fill="#f0f0f0" stroke-width="1.200"/></g>
<g fill="none" stroke="#333" stroke-width="1.3" stroke-linecap="round"><rect x="1564.500" y="990" width="17" height="9" stroke-width="1.300"/><path d="M1564.500,986.500H1581.500 M1564.500,984.500V988.500 M1581.500,984.500V988.500" stroke-width="1.100"/></g></svg>
<span class="t" style="left:263.5px;top:984.5px;font-size:13.5px;line-height:18px;color:#8a8a8a;letter-spacing:-0.257px;">279%</span>
<span class="t" style="left:420.0px;top:984.5px;font-size:13.5px;line-height:18px;color:#8a8a8a;letter-spacing:0.165px;">N/A</span>
<span class="t" style="left:570.0px;top:984.5px;font-size:13.5px;line-height:18px;color:#222;letter-spacing:-0.069px;">1:50</span>
<span class="t" style="left:710.5px;top:984.5px;font-size:13.5px;line-height:18px;color:#222;letter-spacing:-0.002px;">Custom</span>
<span class="t" style="left:846.0px;top:984.5px;font-size:13.5px;line-height:18px;color:#222;letter-spacing:0.351px;">Entire Model</span>
<span class="t" style="left:1021.0px;top:984.5px;font-size:13.5px;line-height:18px;color:#222;letter-spacing:0.083px;">B&amp;W</span>
<span class="t" style="left:1139.0px;top:984.5px;font-size:13.5px;line-height:18px;color:#222;letter-spacing:0.011px;">03 Building Pl...</span>
<span class="t" style="left:1298.0px;top:984.5px;font-size:13.5px;line-height:18px;color:#222;letter-spacing:0.081px;">No Overrides</span>
<span class="t" style="left:1442.0px;top:984.5px;font-size:13.5px;line-height:18px;color:#222;letter-spacing:-0.051px;">01 Existing Plan</span>
<span class="t" style="left:1614.0px;top:984.5px;font-size:13.5px;line-height:18px;color:#222;letter-spacing:0.165px;">Architect</span>
<svg class="r" style="left:332px;top:989px;" width="5" height="8" viewBox="0 0 5 8" preserveAspectRatio="none"><path d="M0,0L4,4L0,8Z" fill="#9a9a9a"/></svg>
<svg class="r" style="left:483px;top:989px;" width="5" height="8" viewBox="0 0 5 8" preserveAspectRatio="none"><path d="M0,0L4,4L0,8Z" fill="#9a9a9a"/></svg>
<svg class="r" style="left:634.5px;top:989px;" width="5" height="8" viewBox="0 0 5 8" preserveAspectRatio="none"><path d="M0,0L4,4L0,8Z" fill="#222"/></svg>
<svg class="r" style="left:785.5px;top:989px;" width="5" height="8" viewBox="0 0 5 8" preserveAspectRatio="none"><path d="M0,0L4,4L0,8Z" fill="#222"/></svg>
<svg class="r" style="left:936.5px;top:989px;" width="5" height="8" viewBox="0 0 5 8" preserveAspectRatio="none"><path d="M0,0L4,4L0,8Z" fill="#222"/></svg>
<svg class="r" style="left:1087.5px;top:989px;" width="5" height="8" viewBox="0 0 5 8" preserveAspectRatio="none"><path d="M0,0L4,4L0,8Z" fill="#222"/></svg>
<svg class="r" style="left:1239px;top:989px;" width="5" height="8" viewBox="0 0 5 8" preserveAspectRatio="none"><path d="M0,0L4,4L0,8Z" fill="#222"/></svg>
<svg class="r" style="left:1390px;top:989px;" width="5" height="8" viewBox="0 0 5 8" preserveAspectRatio="none"><path d="M0,0L4,4L0,8Z" fill="#222"/></svg>
<svg class="r" style="left:1542px;top:989px;" width="5" height="8" viewBox="0 0 5 8" preserveAspectRatio="none"><path d="M0,0L4,4L0,8Z" fill="#222"/></svg>
<svg class="r" style="left:1691px;top:989px;" width="5" height="8" viewBox="0 0 5 8" preserveAspectRatio="none"><path d="M0,0L4,4L0,8Z" fill="#222"/></svg>
</body></html>
